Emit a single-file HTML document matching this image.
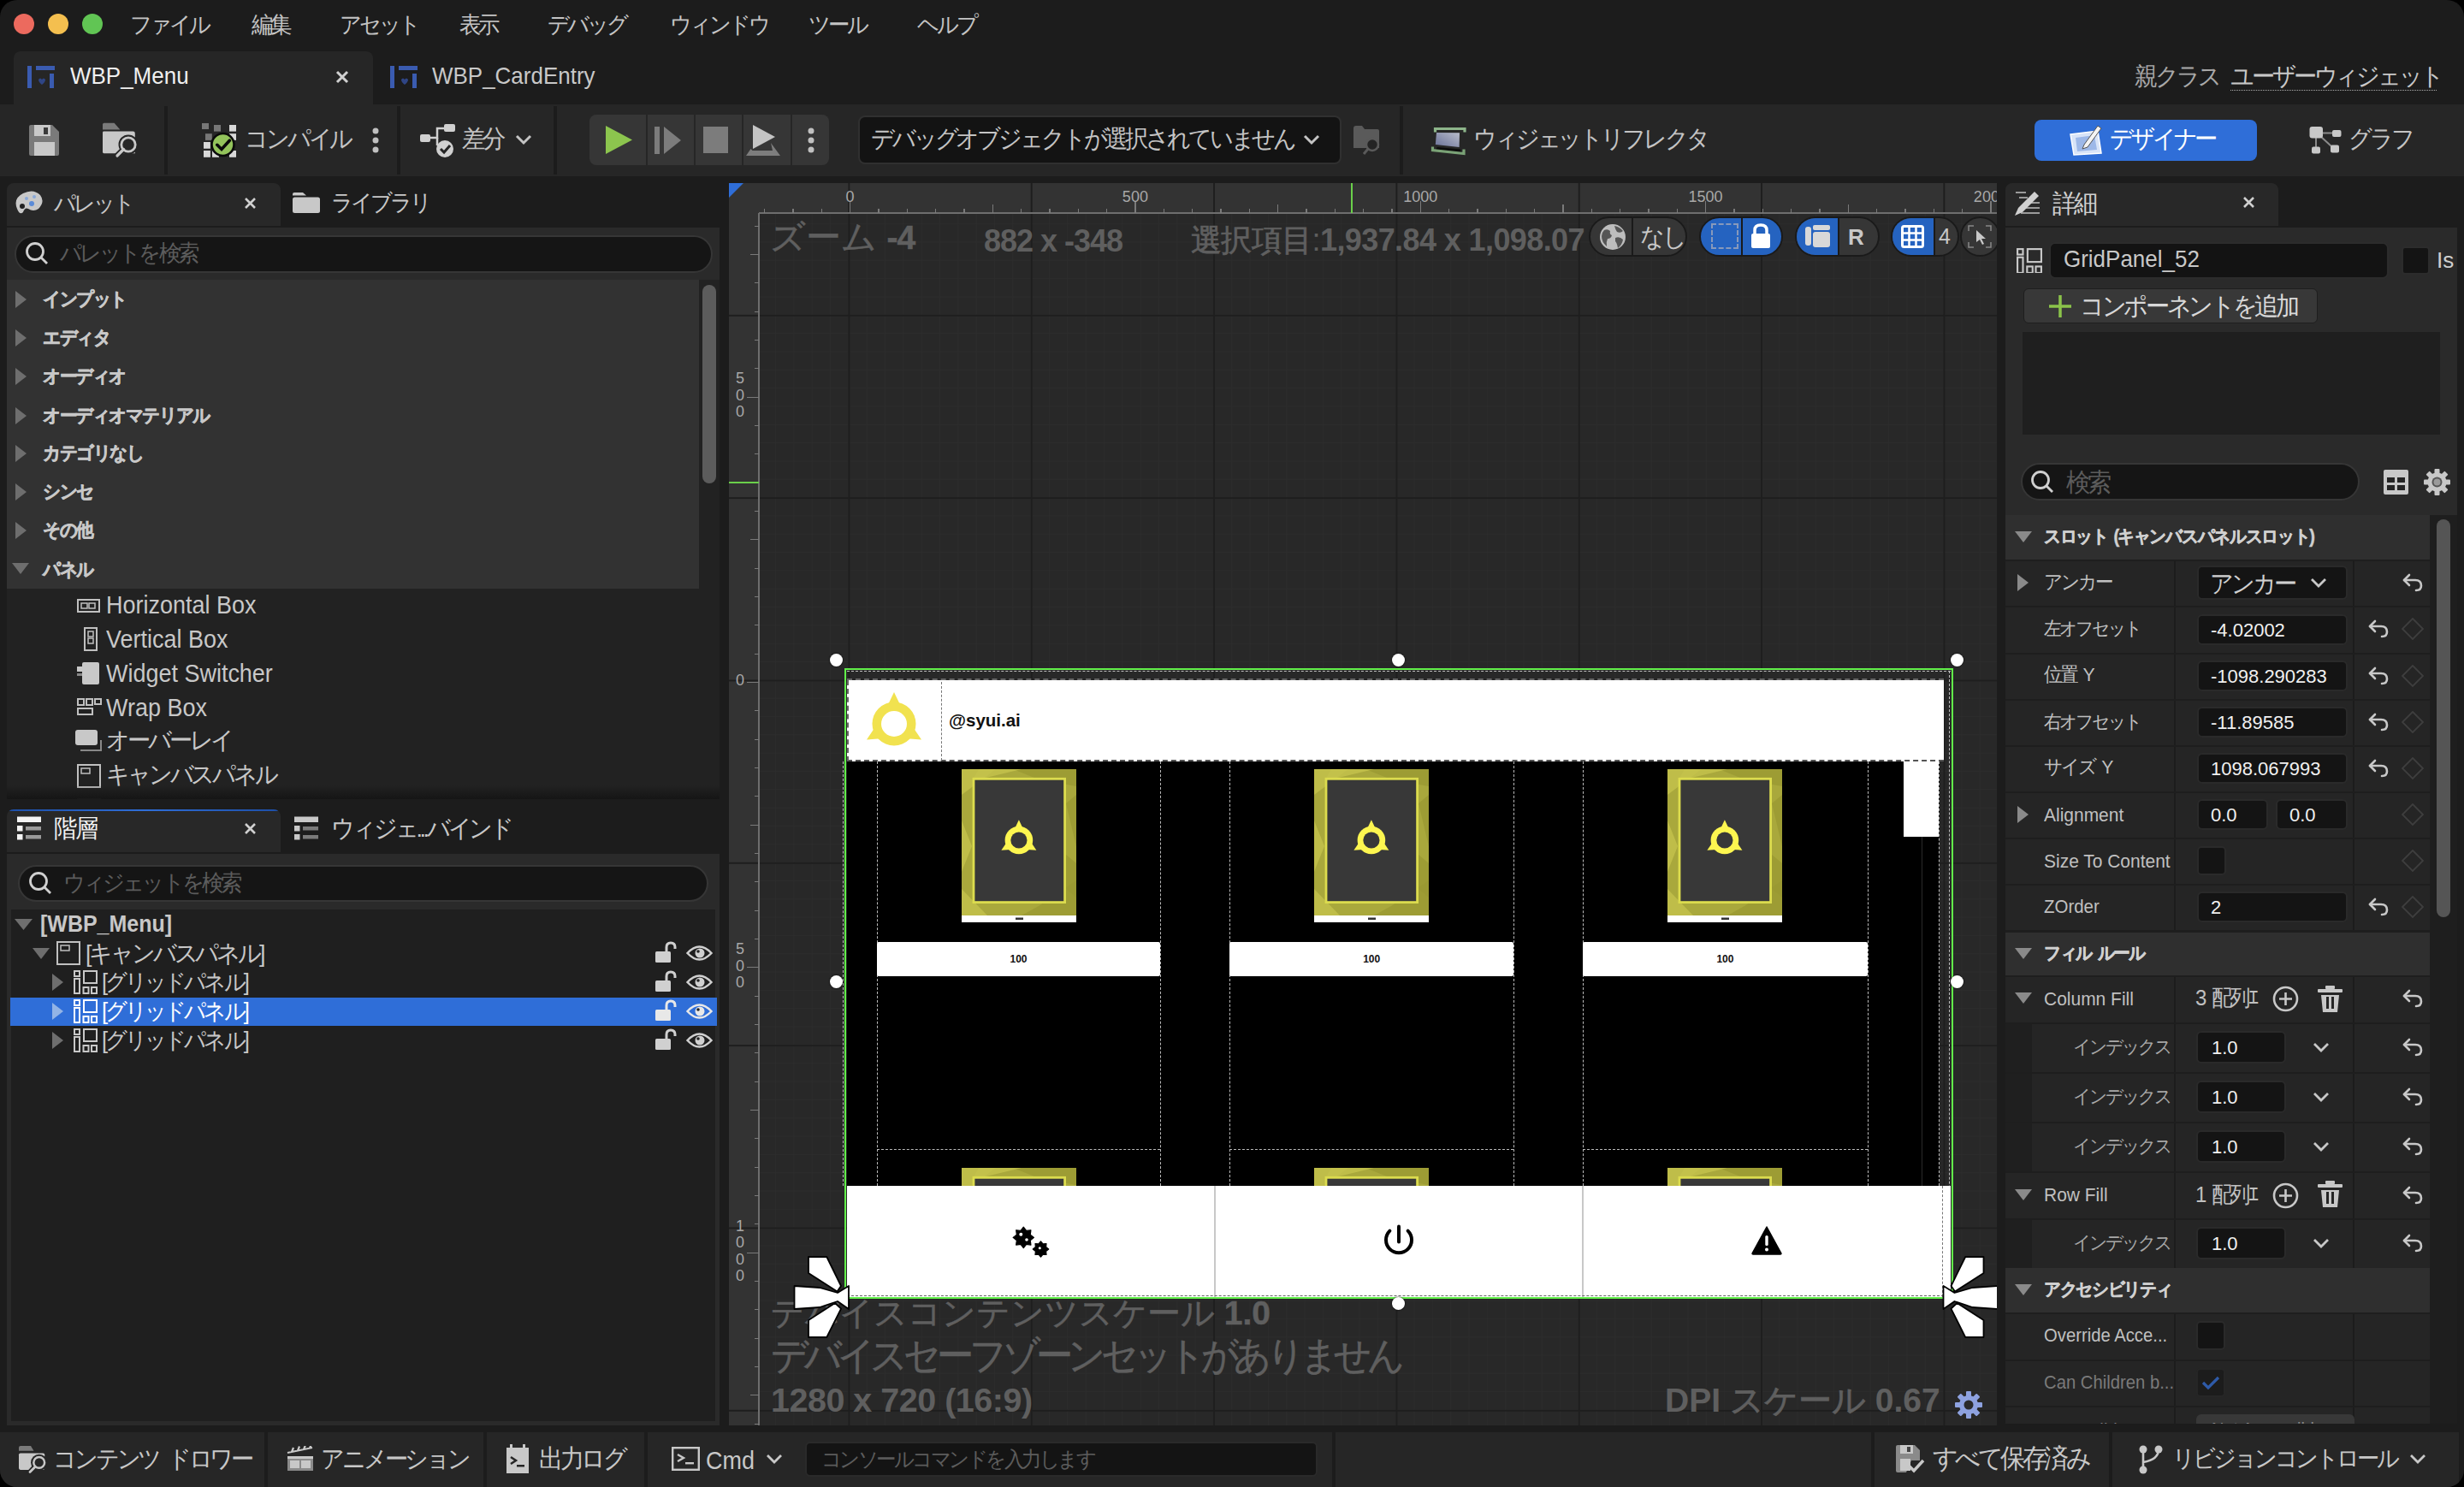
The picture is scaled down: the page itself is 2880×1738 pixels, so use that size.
<!DOCTYPE html>
<html><head><meta charset="utf-8">
<style>
*{box-sizing:border-box;margin:0;padding:0}
html,body{width:2880px;height:1738px;overflow:hidden;background:#000}
body{font-family:"Liberation Sans",sans-serif;position:relative;color:#c0c0c0}
.a{position:absolute}
.t{position:absolute;white-space:nowrap;line-height:1}
#win{left:0;top:0;width:2880px;height:1738px;background:#1c1c1c;border-radius:20px;overflow:hidden}
.sep{position:absolute;width:4px;background:#1c1c1c}
.bj{-webkit-text-stroke:0.6px currentColor}
</style></head><body>
<div id="win" class="a">

<!-- ===== TITLE / MENU BAR ===== -->
<div class="a" style="left:16px;top:16px;width:24px;height:24px;border-radius:50%;background:#ec6a5e"></div>
<div class="a" style="left:56px;top:16px;width:24px;height:24px;border-radius:50%;background:#f4bf4f"></div>
<div class="a" style="left:96px;top:16px;width:24px;height:24px;border-radius:50%;background:#61c554"></div>
<div id="menu" style="font-size:23px;color:#c4c4c4">
<span class="t" style="left:152px;top:14.84px;font-size:27.31px;letter-spacing:-3.41px;transform:scaleX(0.94);transform-origin:0 0;word-spacing:5.46px">ファイル</span>
<span class="t" style="left:294px;top:14.84px;font-size:27.31px;letter-spacing:-3.41px;transform:scaleX(0.94);transform-origin:0 0;word-spacing:5.46px">編集</span>
<span class="t" style="left:397px;top:14.84px;font-size:27.31px;letter-spacing:-3.41px;transform:scaleX(0.94);transform-origin:0 0;word-spacing:5.46px">アセット</span>
<span class="t" style="left:537px;top:14.84px;font-size:27.31px;letter-spacing:-3.41px;transform:scaleX(0.94);transform-origin:0 0;word-spacing:5.46px">表示</span>
<span class="t" style="left:640px;top:14.84px;font-size:27.31px;letter-spacing:-3.41px;transform:scaleX(0.94);transform-origin:0 0;word-spacing:5.46px">デバッグ</span>
<span class="t" style="left:783px;top:14.84px;font-size:27.31px;letter-spacing:-3.41px;transform:scaleX(0.94);transform-origin:0 0;word-spacing:5.46px">ウィンドウ</span>
<span class="t" style="left:945px;top:14.84px;font-size:27.31px;letter-spacing:-3.41px;transform:scaleX(0.94);transform-origin:0 0;word-spacing:5.46px">ツール</span>
<span class="t" style="left:1072px;top:14.84px;font-size:27.31px;letter-spacing:-3.41px;transform:scaleX(0.94);transform-origin:0 0;word-spacing:5.46px">ヘルプ</span>
</div>

<!-- ===== DOCUMENT TABS ===== -->
<div class="a" style="left:16px;top:60px;width:420px;height:62px;background:#262626;border-radius:8px 8px 0 0"></div>
<svg class="a" style="left:31px;top:76px" width="34" height="28" viewBox="0 0 34 28">
 <rect x="1" y="1" width="5" height="26" fill="#3a5bb0"/><rect x="11" y="1" width="22" height="5" fill="#3a5bb0"/><rect x="27" y="10" width="5" height="17" fill="#3a5bb0"/>
 <path d="M14 17 q2-3 4 0 q2-3 4 0 q0 3-4 6 q-4-3-4-6z" fill="#2f4585"/>
</svg>
<span class="t" style="left:82px;top:74.86px;font-size:28.08px;color:#f0f0f0;transform:scaleX(0.925);transform-origin:0 0">WBP_Menu</span>
<svg class="a" style="left:392px;top:82px" width="16" height="16" viewBox="0 0 16 16"><path d="M2 2L14 14M14 2L2 14" stroke="#d0d0d0" stroke-width="3"/></svg>
<svg class="a" style="left:455px;top:76px" width="34" height="28" viewBox="0 0 34 28">
 <rect x="1" y="1" width="5" height="26" fill="#3a5bb0"/><rect x="11" y="1" width="22" height="5" fill="#3a5bb0"/><rect x="27" y="10" width="5" height="17" fill="#3a5bb0"/>
 <path d="M14 17 q2-3 4 0 q2-3 4 0 q0 3-4 6 q-4-3-4-6z" fill="#2f4585"/>
</svg>
<span class="t" style="left:505px;top:74.86px;font-size:28.08px;color:#c8c8c8;transform:scaleX(0.925);transform-origin:0 0">WBP_CardEntry</span>
<span class="t" style="left:2495px;top:74.75px;font-size:28.50px;color:#a8a8a8;letter-spacing:-3.56px;transform:scaleX(0.94);transform-origin:0 0;word-spacing:5.70px">親クラス</span>
<span class="t" style="left:2607px;top:74.75px;font-size:28.50px;color:#c8c8c8;letter-spacing:-3.56px;transform:scaleX(0.94);transform-origin:0 0;word-spacing:5.70px">ユーザーウィジェット</span>
<div class="a" style="left:2607px;top:105px;width:241px;height:0;border-top:1px dotted #aaa"></div>

<!-- ===== TOOLBAR ===== -->
<div class="a" style="left:0;top:122px;width:2880px;height:84px;background:#262626"></div>
<div class="sep" style="left:192px;top:124px;height:80px"></div>
<div class="sep" style="left:464px;top:124px;height:80px"></div>
<div class="sep" style="left:647px;top:124px;height:80px"></div>
<div class="sep" style="left:1636px;top:124px;height:80px"></div>
<!-- save -->
<svg class="a" style="left:34px;top:146px" width="36" height="36" viewBox="0 0 36 36">
 <path d="M0 2 Q0 0 2 0 H27 L35 8 V34 Q35 36 33 36 H2 Q0 36 0 34Z" fill="#7a7a7a"/>
 <rect x="6" y="0" width="19" height="13" fill="#c8c8c8"/><rect x="17" y="3" width="5" height="8" fill="#3a3a3a"/>
 <rect x="6" y="20" width="24" height="16" fill="#c8c8c8"/>
</svg>
<!-- browse -->
<svg class="a" style="left:110px;top:135px" width="60" height="60" viewBox="0 0 60 60">
 <path d="M10 10.5 Q10 8.8 11.7 8.8 H23.5 L30.3 16.4 H10Z" fill="#7a7a7a"/>
 <path d="M10 20 Q10 18.6 11.4 18.6 H45.5 Q47.8 18.6 47.8 21 V44.2 H11.4 Q10 44.2 10 42.8Z" fill="#c8c8c8"/>
 <circle cx="40" cy="34" r="11.5" fill="#262626"/>
 <path d="M34 40 L26 48" stroke="#262626" stroke-width="7" stroke-linecap="round"/>
 <circle cx="40" cy="34" r="8.2" fill="#262626" stroke="#c8c8c8" stroke-width="2.8"/>
 <path d="M34.5 39.5 L27 47" stroke="#c8c8c8" stroke-width="3.2" stroke-linecap="round"/>
</svg>
<!-- compile -->
<svg class="a" style="left:230px;top:135px" width="50" height="55" viewBox="0 0 50 55">
 <rect x="6" y="9" width="8" height="7" fill="#777"/><rect x="20" y="11" width="8" height="7.6" fill="#777"/><rect x="38" y="11" width="8" height="7.6" fill="#d8d8d8"/>
 <rect x="10" y="21.2" width="7.8" height="7.7" fill="#777"/><rect x="38" y="21.2" width="8" height="7.7" fill="#d8d8d8"/>
 <rect x="8" y="31" width="7.9" height="7.7" fill="#d8d8d8"/><rect x="8" y="41" width="7.9" height="7.8" fill="#d8d8d8"/><rect x="18" y="41" width="8" height="7.8" fill="#d8d8d8"/><rect x="38" y="41" width="8" height="7.8" fill="#d8d8d8"/>
 <circle cx="30.5" cy="34" r="13" fill="#93c35b" stroke="#0a0a0a" stroke-width="2.6"/>
 <path d="M23.8 34.3 L29 39.5 L38.3 29.2" stroke="#0a0a0a" stroke-width="3.6" fill="none" stroke-linecap="round"/>
</svg>
<span class="t" style="left:286px;top:147.75px;font-size:28.50px;color:#c4c4c4;letter-spacing:-3.56px;transform:scaleX(0.94);transform-origin:0 0;word-spacing:5.70px">コンパイル</span>
<svg class="a" style="left:434px;top:149px" width="10" height="30"><circle cx="5" cy="4" r="3.5" fill="#c0c0c0"/><circle cx="5" cy="15" r="3.5" fill="#c0c0c0"/><circle cx="5" cy="26" r="3.5" fill="#c0c0c0"/></svg>
<!-- diff -->
<svg class="a" style="left:491px;top:145px" width="42" height="40" viewBox="0 0 42 40">
 <rect x="0" y="12" width="12" height="9" rx="2" fill="#d0d0d0"/><rect x="28" y="0" width="13" height="9" rx="2" fill="#d0d0d0"/>
 <path d="M12 16 H20 V5 H28" stroke="#d0d0d0" stroke-width="2.5" fill="none"/><path d="M20 16 V25" stroke="#d0d0d0" stroke-width="2.5"/>
 <circle cx="29" cy="29" r="10" fill="#d0d0d0"/><path d="M24 29 L28 33 L35 25" stroke="#242424" stroke-width="3" fill="none"/>
</svg>
<span class="t" style="left:540px;top:147.75px;font-size:28.50px;color:#c4c4c4;letter-spacing:-3.56px;transform:scaleX(0.94);transform-origin:0 0;word-spacing:5.70px">差分</span>
<svg class="a" style="left:602px;top:156px" width="20" height="14"><path d="M2 3 L10 11 L18 3" stroke="#c4c4c4" stroke-width="3" fill="none"/></svg>
<!-- play group -->
<div class="a" style="left:689px;top:134px;width:280px;height:59px;background:#363636;border-radius:8px"></div>
<div class="a" style="left:755px;top:134px;width:2px;height:59px;background:#262626"></div>
<div class="a" style="left:811px;top:134px;width:2px;height:59px;background:#262626"></div>
<div class="a" style="left:867px;top:134px;width:2px;height:59px;background:#262626"></div>
<div class="a" style="left:924px;top:134px;width:2px;height:59px;background:#262626"></div>
<svg class="a" style="left:708px;top:147px" width="32" height="33"><path d="M0 0 L31 16.5 L0 33Z" fill="#8cc54e"/></svg>
<svg class="a" style="left:765px;top:148px" width="32" height="32"><rect x="0" y="0" width="6" height="32" fill="#7c7c7c"/><path d="M11 0 L31 16 L11 32Z" fill="#7c7c7c"/></svg>
<div class="a" style="left:822px;top:148px;width:29px;height:31px;background:#7c7c7c"></div>
<svg class="a" style="left:871px;top:146px" width="42" height="38"><path d="M9 0 L35 14 L9 28Z" fill="#c4c4c4"/><path d="M1 36 H41 L30 21 L32 30 H8.5 L6.5 28Z" fill="#7d7d7d"/></svg>
<svg class="a" style="left:943px;top:149px" width="10" height="30"><circle cx="5" cy="4" r="3.5" fill="#c0c0c0"/><circle cx="5" cy="15" r="3.5" fill="#c0c0c0"/><circle cx="5" cy="26" r="3.5" fill="#c0c0c0"/></svg>
<!-- debug dropdown -->
<div class="a" style="left:1003px;top:135px;width:565px;height:57px;background:#131313;border:2px solid #303030;border-radius:8px"></div>
<span class="t" style="left:1018px;top:147.75px;font-size:28.50px;color:#c4c4c4;letter-spacing:-3.56px;transform:scaleX(0.94);transform-origin:0 0;word-spacing:5.70px">デバッグオブジェクトが選択されていません</span>
<svg class="a" style="left:1523px;top:156px" width="20" height="14"><path d="M2 3 L10 11 L18 3" stroke="#c4c4c4" stroke-width="3" fill="none"/></svg>
<svg class="a" style="left:1582px;top:147px" width="34" height="34" viewBox="0 0 34 34">
 <path d="M0 3 Q0 0 3 0 H10 L13 4 H28 Q30 4 30 6 V26 H0Z" fill="#5a5a5a"/>
 <circle cx="22" cy="22" r="7" fill="#242424" stroke="#5a5a5a" stroke-width="2.5"/><path d="M17 27 L12 33" stroke="#5a5a5a" stroke-width="3"/>
</svg>
<!-- reflector -->
<svg class="a" style="left:1670px;top:146px" width="46" height="38" viewBox="0 0 46 38"><defs><linearGradient id="rg" x1="0" y1="1" x2="1" y2="0"><stop offset="0" stop-color="#6a7198"/><stop offset="1" stop-color="#b8bccb"/></linearGradient></defs><path d="M7.5 8.5 V4.5 H42 V8.5" stroke="#8db58a" stroke-width="3.2" fill="none"/><path d="M10 26 L37 28.5 L38 32 L8 29Z" fill="#0c0c0c"/><path d="M9 9 L36 9.2 L35.6 26 L7.8 23Z" fill="url(#rg)"/><path d="M4.5 25.5 V29.5 L41 33.5 V28.5" stroke="#7aa276" stroke-width="3.2" fill="none"/></svg>
<span class="t" style="left:1722px;top:147.75px;font-size:28.50px;color:#c4c4c4;letter-spacing:-3.56px;transform:scaleX(0.94);transform-origin:0 0;word-spacing:5.70px">ウィジェットリフレクタ</span>
<!-- designer / graph -->
<div class="a" style="left:2378px;top:140px;width:260px;height:48px;background:#2f6ed8;border-radius:8px"></div>
<svg class="a" style="left:2418px;top:143px" width="40" height="40" viewBox="0 0 40 40">
 <path d="M2 14 L34 10 L38 36 L6 38Z" fill="#d8e4f8" stroke="#fff" stroke-width="1.5"/><path d="M8 18 L30 15 L33 32 L10 34Z" fill="#9db8e8"/>
 <path d="M18 26 L34 4 L38 7 L22 29 L16 31Z" fill="#f4f4f4" stroke="#555" stroke-width="1"/>
</svg>
<span class="t" style="left:2466px;top:147.75px;font-size:28.50px;color:#ffffff;letter-spacing:-3.56px;transform:scaleX(0.94);transform-origin:0 0;word-spacing:5.70px">デザイナー</span>
<svg class="a" style="left:2698px;top:147px" width="40" height="35" viewBox="0 0 40 35"><path d="M17 8.5 H28 M9 14 V25 M14 12 L27 24" stroke="#8a8a8a" stroke-width="2"/><rect x="1.5" y="1" width="15.5" height="13.5" rx="3" fill="#c8c8c8"/><rect x="28" y="5" width="10.5" height="8" rx="2" fill="#c8c8c8"/><rect x="4" y="24.6" width="10" height="8" rx="2" fill="#c8c8c8"/><rect x="26" y="22.6" width="10" height="9" rx="2" fill="#c8c8c8"/></svg>
<span class="t" style="left:2745px;top:147.75px;font-size:28.50px;color:#c4c4c4;letter-spacing:-3.56px;transform:scaleX(0.94);transform-origin:0 0;word-spacing:5.70px">グラフ</span>

<!-- ===== LEFT PANEL ===== -->
<div class="a" style="left:8px;top:214px;width:320px;height:50px;background:#282828;border-radius:8px 8px 0 0"></div>
<svg class="a" style="left:17px;top:222px" width="34" height="30" viewBox="0 0 34 30">
 <path d="M3 22 Q-2 10 10 4 Q22 -2 30 6 Q36 14 28 22 Q22 26 16 22 Q12 20 10 26 Q6 30 3 22Z" fill="#c8c8c8"/>
 <circle cx="9" cy="19" r="3" fill="#222"/><circle cx="20" cy="16" r="3" fill="#5b8bd8"/><circle cx="14" cy="10" r="2" fill="#8aa8d8"/><circle cx="23" cy="8" r="2" fill="#8aa8d8"/>
</svg>
<span class="t" style="left:63px;top:223.84px;font-size:27.31px;color:#c8c8c8;letter-spacing:-3.41px;transform:scaleX(0.94);transform-origin:0 0;word-spacing:5.46px">パレット</span>
<svg class="a" style="left:285px;top:230px" width="15" height="15" viewBox="0 0 15 15"><path d="M2 2L13 13M13 2L2 13" stroke="#d0d0d0" stroke-width="2.6"/></svg>
<svg class="a" style="left:342px;top:224px" width="33" height="26" viewBox="0 0 33 26"><path d="M0 3 Q0 1 2 1 H12 L16 4.5 H0Z" fill="#c8c8c8"/><rect x="0" y="6.5" width="32" height="18.5" rx="2.5" fill="#c8c8c8"/></svg>
<span class="t" style="left:387px;top:222.84px;font-size:27.31px;color:#c8c8c8;letter-spacing:-3.41px;transform:scaleX(0.94);transform-origin:0 0;word-spacing:5.46px">ライブラリ</span>
<div class="a" style="left:8px;top:266px;width:833px;height:61px;background:#2a2a2a"></div>
<div class="a" style="left:17px;top:275px;width:816px;height:44px;background:#151515;border:2px solid #363636;border-radius:22px"></div>
<svg class="a" style="left:28px;top:281px" width="30" height="30" viewBox="0 0 30 30"><circle cx="13" cy="13" r="9.5" fill="none" stroke="#d0d0d0" stroke-width="2.8"/><path d="M20 20 L27 27" stroke="#d0d0d0" stroke-width="2.8"/></svg>
<span class="t" style="left:70px;top:281.84px;font-size:27.31px;color:#5c5c5c;letter-spacing:-3.41px;transform:scaleX(0.94);transform-origin:0 0;word-spacing:5.46px">パレットを検索</span>
<div class="a" style="left:8px;top:327px;width:809px;height:361px;background:#323232"></div>
<div class="a" style="left:817px;top:327px;width:24px;height:361px;background:#222"></div>
<div class="a" style="left:821px;top:333px;width:16px;height:232px;background:#5c5c5c;border-radius:8px"></div>
<div id="cats" class="bj" style="font-size:19.5px;font-weight:bold;color:#c8c8c8">
<svg class="a" style="left:18px;top:340px" width="13" height="20"><path d="M0 0 L13 10 L0 20Z" fill="#6e6e6e"/></svg><span class="t" style="left:50px;top:338.83px;font-size:21.84px;letter-spacing:-2.18px;transform:scaleX(0.94);transform-origin:0 0;word-spacing:3.49px">インプット</span>
<svg class="a" style="left:18px;top:385px" width="13" height="20"><path d="M0 0 L13 10 L0 20Z" fill="#6e6e6e"/></svg><span class="t" style="left:50px;top:383.83px;font-size:21.84px;letter-spacing:-2.18px;transform:scaleX(0.94);transform-origin:0 0;word-spacing:3.49px">エディタ</span>
<svg class="a" style="left:18px;top:430px" width="13" height="20"><path d="M0 0 L13 10 L0 20Z" fill="#6e6e6e"/></svg><span class="t" style="left:50px;top:428.83px;font-size:21.84px;letter-spacing:-2.18px;transform:scaleX(0.94);transform-origin:0 0;word-spacing:3.49px">オーディオ</span>
<svg class="a" style="left:18px;top:476px" width="13" height="20"><path d="M0 0 L13 10 L0 20Z" fill="#6e6e6e"/></svg><span class="t" style="left:50px;top:474.83px;font-size:21.84px;letter-spacing:-2.18px;transform:scaleX(0.94);transform-origin:0 0;word-spacing:3.49px">オーディオマテリアル</span>
<svg class="a" style="left:18px;top:520px" width="13" height="20"><path d="M0 0 L13 10 L0 20Z" fill="#6e6e6e"/></svg><span class="t" style="left:50px;top:518.83px;font-size:21.84px;letter-spacing:-2.18px;transform:scaleX(0.94);transform-origin:0 0;word-spacing:3.49px">カテゴリなし</span>
<svg class="a" style="left:18px;top:565px" width="13" height="20"><path d="M0 0 L13 10 L0 20Z" fill="#6e6e6e"/></svg><span class="t" style="left:50px;top:563.83px;font-size:21.84px;letter-spacing:-2.18px;transform:scaleX(0.94);transform-origin:0 0;word-spacing:3.49px">シンセ</span>
<svg class="a" style="left:18px;top:610px" width="13" height="20"><path d="M0 0 L13 10 L0 20Z" fill="#6e6e6e"/></svg><span class="t" style="left:50px;top:608.83px;font-size:21.84px;letter-spacing:-2.18px;transform:scaleX(0.94);transform-origin:0 0;word-spacing:3.49px">その他</span>
<svg class="a" style="left:14px;top:658px" width="20" height="13"><path d="M0 0 L20 0 L10 13Z" fill="#6e6e6e"/></svg><span class="t" style="left:50px;top:654.83px;font-size:21.84px;letter-spacing:-2.18px;transform:scaleX(0.94);transform-origin:0 0;word-spacing:3.49px">パネル</span>
</div>
<div class="a" style="left:8px;top:688px;width:833px;height:246px;background:#222222;overflow:hidden">
 <div style="position:absolute;left:0;top:0;font-size:27px;color:#c8c8c8">
 <svg class="a" style="left:82px;top:12px" width="27" height="16" viewBox="0 0 27 16"><rect x="1" y="1" width="25" height="14" fill="none" stroke="#c0c0c0" stroke-width="2"/><rect x="5" y="5" width="7" height="6" fill="none" stroke="#c0c0c0" stroke-width="1.5"/><rect x="14" y="5" width="7" height="6" fill="none" stroke="#c0c0c0" stroke-width="1.5"/></svg>
 <span class="t" style="left:116px;top:4.81px;font-size:29.16px;transform:scaleX(0.925);transform-origin:0 0">Horizontal Box</span>
 <svg class="a" style="left:90px;top:45px" width="16" height="28" viewBox="0 0 16 28"><rect x="1" y="1" width="14" height="26" fill="none" stroke="#c0c0c0" stroke-width="2"/><rect x="5" y="5" width="6" height="6" fill="none" stroke="#c0c0c0" stroke-width="1.5"/><rect x="5" y="13" width="6" height="6" fill="none" stroke="#c0c0c0" stroke-width="1.5"/></svg>
 <span class="t" style="left:116px;top:44.81px;font-size:29.16px;transform:scaleX(0.925);transform-origin:0 0">Vertical Box</span>
 <svg class="a" style="left:82px;top:85px" width="27" height="28" viewBox="0 0 27 28"><rect x="6" y="1" width="20" height="26" rx="2" fill="#c8c8c8"/><rect x="0" y="6" width="6" height="6" fill="#c8c8c8"/><rect x="0" y="14" width="6" height="3" fill="#888"/></svg>
 <span class="t" style="left:116px;top:84.81px;font-size:29.16px;transform:scaleX(0.925);transform-origin:0 0">Widget Switcher</span>
 <svg class="a" style="left:82px;top:128px" width="29" height="20" viewBox="0 0 29 20"><rect x="1" y="1" width="7" height="7" fill="none" stroke="#c0c0c0" stroke-width="2"/><rect x="11" y="1" width="7" height="7" fill="none" stroke="#c0c0c0" stroke-width="2"/><rect x="21" y="1" width="7" height="6" fill="none" stroke="#c0c0c0" stroke-width="2"/><rect x="1" y="12" width="17" height="7" fill="none" stroke="#c0c0c0" stroke-width="2"/></svg>
 <span class="t" style="left:116px;top:124.81px;font-size:29.16px;transform:scaleX(0.925);transform-origin:0 0">Wrap Box</span>
 <svg class="a" style="left:80px;top:165px" width="32" height="26" viewBox="0 0 32 26"><rect x="0" y="0" width="26" height="18" rx="3" fill="#c8c8c8"/><path d="M6 24 H30 V12" stroke="#888" stroke-width="2" fill="none"/></svg>
 <span class="t" style="left:116px;top:162.75px;font-size:28.50px;letter-spacing:-3.56px;transform:scaleX(0.94);transform-origin:0 0;word-spacing:5.70px">オーバーレイ</span>
 <svg class="a" style="left:82px;top:205px" width="28" height="28" viewBox="0 0 28 28"><rect x="1" y="1" width="26" height="26" fill="none" stroke="#c0c0c0" stroke-width="2"/><rect x="5" y="5" width="10" height="6" fill="none" stroke="#c0c0c0" stroke-width="1.5"/></svg>
 <span class="t" style="left:116px;top:202.75px;font-size:28.50px;letter-spacing:-3.56px;transform:scaleX(0.94);transform-origin:0 0;word-spacing:5.70px">キャンバスパネル</span>
 <svg class="a" style="left:82px;top:245px" width="28" height="28" viewBox="0 0 28 28"><rect x="1" y="1" width="26" height="26" fill="none" stroke="#c0c0c0" stroke-width="2"/></svg>
 </div>
 <div class="a" style="left:0;top:230px;width:833px;height:16px;background:linear-gradient(rgba(21,21,21,0),#151515)"></div>
</div>
<!-- hierarchy -->
<div class="a" style="left:8px;top:946px;width:320px;height:50px;background:#282828;border-radius:8px 8px 0 0;overflow:hidden"><div style="height:2px;background:linear-gradient(90deg,#1d4fa8,#2f6ed8,#1d4fa8)"></div></div>
<svg class="a" style="left:19px;top:954px" width="30" height="28" viewBox="0 0 30 28"><rect x="1" y="0.5" width="28" height="6.5" fill="#f4f4f4"/><rect x="1" y="11" width="6.5" height="6.5" fill="#f4f4f4"/><rect x="11" y="12" width="18" height="4.5" fill="#9a9a9a"/><rect x="1" y="21" width="6.5" height="6.5" fill="#f4f4f4"/><rect x="11" y="22" width="18" height="4.5" fill="#9a9a9a"/></svg>
<span class="t" style="left:63px;top:954px;font-size:28.5px;color:#f2f2f2;letter-spacing:-2.5px;transform:scaleX(0.94);transform-origin:0 0">階層</span>
<svg class="a" style="left:285px;top:961px" width="15" height="15" viewBox="0 0 15 15"><path d="M2 2L13 13M13 2L2 13" stroke="#d0d0d0" stroke-width="2.6"/></svg>
<svg class="a" style="left:343px;top:954px" width="30" height="28" viewBox="0 0 30 28"><rect x="1" y="0.5" width="28" height="6.5" fill="#c8c8c8"/><rect x="1" y="11" width="6.5" height="6.5" fill="#c8c8c8"/><rect x="11" y="12" width="18" height="4.5" fill="#7a7a7a"/><rect x="1" y="21" width="6.5" height="6.5" fill="#c8c8c8"/><rect x="11" y="22" width="18" height="4.5" fill="#7a7a7a"/></svg>
<span class="t" style="left:387px;top:953.75px;font-size:28.50px;color:#c8c8c8;letter-spacing:-3.56px;transform:scaleX(0.94);transform-origin:0 0;word-spacing:5.70px">ウィジェ...バインド</span>
<div class="a" style="left:8px;top:998px;width:833px;height:668px;background:#2a2a2a"></div>
<div class="a" style="left:21px;top:1011px;width:807px;height:43px;background:#151515;border:2px solid #363636;border-radius:22px"></div>
<svg class="a" style="left:32px;top:1017px" width="30" height="30" viewBox="0 0 30 30"><circle cx="13" cy="13" r="9.5" fill="none" stroke="#d0d0d0" stroke-width="2.8"/><path d="M20 20 L27 27" stroke="#d0d0d0" stroke-width="2.8"/></svg>
<span class="t" style="left:74px;top:1017.84px;font-size:27.31px;color:#5c5c5c;letter-spacing:-3.41px;transform:scaleX(0.94);transform-origin:0 0;word-spacing:5.46px">ウィジェットを検索</span>
<div class="a" style="left:11px;top:1063px;width:827px;height:600px;background:#1f1f1f;border:2px solid #2a2a2a;border-top:none"></div>
<div class="a" style="left:12px;top:1166px;width:826px;height:33px;background:#2f6ed8"></div>
<div id="tree" style="color:#c8c8c8">
 <svg class="a" style="left:17px;top:1074px" width="21" height="13"><path d="M0 0 L21 0 L10.5 13Z" fill="#6e6e6e"/></svg>
 <span class="t" style="left:47px;top:1066.90px;font-size:27.00px;font-weight:bold;transform:scaleX(0.925);transform-origin:0 0">[WBP_Menu]</span>
 <svg class="a" style="left:38px;top:1108px" width="20" height="13"><path d="M0 0 L20 0 L10 13Z" fill="#6e6e6e"/></svg>
 <svg class="a" style="left:66px;top:1100px" width="28" height="28" viewBox="0 0 28 28"><rect x="1" y="1" width="26" height="26" fill="none" stroke="#c0c0c0" stroke-width="2"/><rect x="5" y="5" width="10" height="6" fill="none" stroke="#c0c0c0" stroke-width="1.5"/></svg>
 <span class="t" style="left:100px;top:1099.75px;font-size:28.50px;letter-spacing:-3.56px;transform:scaleX(0.94);transform-origin:0 0;word-spacing:5.70px">[キャンバスパネル]</span>
 <svg class="a" style="left:61px;top:1138px" width="13" height="20"><path d="M0 0 L13 10 L0 20Z" fill="#6e6e6e"/></svg>
 <svg class="a" style="left:86px;top:1134px" width="28" height="28" viewBox="0 0 28 28"><rect x="1" y="1" width="6" height="6" fill="none" stroke="#c8c8c8" stroke-width="2"/><rect x="12" y="1" width="15" height="14" fill="none" stroke="#c8c8c8" stroke-width="2"/><rect x="1" y="10" width="6" height="17" fill="none" stroke="#c8c8c8" stroke-width="2"/><rect x="11.5" y="20" width="6" height="7" fill="none" stroke="#c8c8c8" stroke-width="2"/><rect x="21" y="20" width="6" height="7" fill="none" stroke="#c8c8c8" stroke-width="2"/></svg>
 <span class="t" style="left:119px;top:1133.84px;font-size:27.31px;letter-spacing:-3.41px;transform:scaleX(0.94);transform-origin:0 0;word-spacing:5.46px">[グリッドパネル]</span>
 <svg class="a" style="left:61px;top:1172px" width="13" height="20"><path d="M0 0 L13 10 L0 20Z" fill="#93b4e6"/></svg>
 <svg class="a" style="left:86px;top:1168px" width="28" height="28" viewBox="0 0 28 28"><rect x="1" y="1" width="6" height="6" fill="none" stroke="#fff" stroke-width="2"/><rect x="12" y="1" width="15" height="14" fill="none" stroke="#fff" stroke-width="2"/><rect x="1" y="10" width="6" height="17" fill="none" stroke="#fff" stroke-width="2"/><rect x="11.5" y="20" width="6" height="7" fill="none" stroke="#fff" stroke-width="2"/><rect x="21" y="20" width="6" height="7" fill="none" stroke="#fff" stroke-width="2"/></svg>
 <span class="t" style="left:119px;top:1167.84px;font-size:27.31px;color:#fff;letter-spacing:-3.41px;transform:scaleX(0.94);transform-origin:0 0;word-spacing:5.46px">[グリッドパネル]</span>
 <svg class="a" style="left:61px;top:1206px" width="13" height="20"><path d="M0 0 L13 10 L0 20Z" fill="#6e6e6e"/></svg>
 <svg class="a" style="left:86px;top:1202px" width="28" height="28" viewBox="0 0 28 28"><rect x="1" y="1" width="6" height="6" fill="none" stroke="#c8c8c8" stroke-width="2"/><rect x="12" y="1" width="15" height="14" fill="none" stroke="#c8c8c8" stroke-width="2"/><rect x="1" y="10" width="6" height="17" fill="none" stroke="#c8c8c8" stroke-width="2"/><rect x="11.5" y="20" width="6" height="7" fill="none" stroke="#c8c8c8" stroke-width="2"/><rect x="21" y="20" width="6" height="7" fill="none" stroke="#c8c8c8" stroke-width="2"/></svg>
 <span class="t" style="left:119px;top:1201.84px;font-size:27.31px;letter-spacing:-3.41px;transform:scaleX(0.94);transform-origin:0 0;word-spacing:5.46px">[グリッドパネル]</span>
</div>
<svg class="a" style="left:766px;top:1100px" width="26" height="26" viewBox="0 0 26 26"><rect x="0" y="12" width="18" height="13" rx="1.5" fill="#d0d0d0"/><path d="M13 12 V7 Q13 2 18 2 Q23 2 23 7 V9" stroke="#d0d0d0" stroke-width="3" fill="none"/></svg>
<svg class="a" style="left:802px;top:1103px" width="31" height="22" viewBox="0 0 31 22"><path d="M1.5 11 Q15.5 -4 29.5 11 Q15.5 26 1.5 11Z" fill="none" stroke="#d0d0d0" stroke-width="2.5"/><circle cx="16" cy="11" r="5.5" fill="#d0d0d0"/><circle cx="14" cy="9" r="1.8" fill="#222"/></svg>
<svg class="a" style="left:766px;top:1134px" width="26" height="26" viewBox="0 0 26 26"><rect x="0" y="12" width="18" height="13" rx="1.5" fill="#d0d0d0"/><path d="M13 12 V7 Q13 2 18 2 Q23 2 23 7 V9" stroke="#d0d0d0" stroke-width="3" fill="none"/></svg>
<svg class="a" style="left:802px;top:1137px" width="31" height="22" viewBox="0 0 31 22"><path d="M1.5 11 Q15.5 -4 29.5 11 Q15.5 26 1.5 11Z" fill="none" stroke="#d0d0d0" stroke-width="2.5"/><circle cx="16" cy="11" r="5.5" fill="#d0d0d0"/><circle cx="14" cy="9" r="1.8" fill="#222"/></svg>
<svg class="a" style="left:766px;top:1168px" width="26" height="26" viewBox="0 0 26 26"><rect x="0" y="12" width="18" height="13" rx="1.5" fill="#e8e8e8"/><path d="M13 12 V7 Q13 2 18 2 Q23 2 23 7 V9" stroke="#e8e8e8" stroke-width="3" fill="none"/></svg>
<svg class="a" style="left:802px;top:1171px" width="31" height="22" viewBox="0 0 31 22"><path d="M1.5 11 Q15.5 -4 29.5 11 Q15.5 26 1.5 11Z" fill="none" stroke="#e8e8e8" stroke-width="2.5"/><circle cx="16" cy="11" r="5.5" fill="#e8e8e8"/><circle cx="14" cy="9" r="1.8" fill="#222"/></svg>
<svg class="a" style="left:766px;top:1202px" width="26" height="26" viewBox="0 0 26 26"><rect x="0" y="12" width="18" height="13" rx="1.5" fill="#d0d0d0"/><path d="M13 12 V7 Q13 2 18 2 Q23 2 23 7 V9" stroke="#d0d0d0" stroke-width="3" fill="none"/></svg>
<svg class="a" style="left:802px;top:1205px" width="31" height="22" viewBox="0 0 31 22"><path d="M1.5 11 Q15.5 -4 29.5 11 Q15.5 26 1.5 11Z" fill="none" stroke="#d0d0d0" stroke-width="2.5"/><circle cx="16" cy="11" r="5.5" fill="#d0d0d0"/><circle cx="14" cy="9" r="1.8" fill="#222"/></svg>

<!-- ===== VIEWPORT ===== -->
<div class="a" style="left:852px;top:214px;width:1482px;height:1452px;overflow:hidden;background-color:#333;background-image:linear-gradient(90deg,#1e1e1e 2px,transparent 2px),linear-gradient(#1e1e1e 2px,transparent 2px);background-size:213.33px 213.33px,213.33px 213.33px;background-position:139.4px 0,0 153.8px">
 <!-- canvas with grid -->
 <div class="a" style="left:35px;top:35px;width:1447px;height:1417px;background-color:#282828;
   background-image:linear-gradient(90deg,#1e1e1e 2px,transparent 2px),linear-gradient(#1e1e1e 2px,transparent 2px),linear-gradient(90deg,#2c2c2c 1px,transparent 1px),linear-gradient(#2c2c2c 1px,transparent 1px);
   background-size:213.33px 213.33px,213.33px 213.33px,21.333px 21.333px,21.333px 21.333px;
   background-position:104.4px 0,0 118.8px,104.4px 0,0 118.8px"></div>
 <div class="a" style="left:35px;top:34px;width:1447px;height:1.5px;background:#6e6e6e"></div>
 <div class="a" style="left:34px;top:35px;width:1.5px;height:1417px;background:#6e6e6e"></div>
 <svg class="a" style="left:0;top:0" width="17" height="17"><path d="M0 0H17L0 17Z" fill="#2f6ed8"/></svg>
 <!--RULERS-->
 <div class="a" style="left:41.0px;top:29.5px;width:1.3px;height:5px;background:#7a7a7a"></div>
 <div class="a" style="left:74.3px;top:29.5px;width:1.3px;height:5px;background:#7a7a7a"></div>
 <div class="a" style="left:107.7px;top:29.5px;width:1.3px;height:5px;background:#7a7a7a"></div>
 <div class="a" style="left:141.0px;top:20.5px;width:1.3px;height:14px;background:#7a7a7a"></div>
 <span class="t" style="left:141.6px;top:7px;font-size:18px;color:#a8a8a8;transform:translateX(-50%)">0</span>
 <div class="a" style="left:174.3px;top:29.5px;width:1.3px;height:5px;background:#7a7a7a"></div>
 <div class="a" style="left:207.7px;top:29.5px;width:1.3px;height:5px;background:#7a7a7a"></div>
 <div class="a" style="left:241.0px;top:29.5px;width:1.3px;height:5px;background:#7a7a7a"></div>
 <div class="a" style="left:274.3px;top:29.5px;width:1.3px;height:5px;background:#7a7a7a"></div>
 <div class="a" style="left:307.7px;top:24.5px;width:1.3px;height:10px;background:#7a7a7a"></div>
 <div class="a" style="left:341.0px;top:29.5px;width:1.3px;height:5px;background:#7a7a7a"></div>
 <div class="a" style="left:374.3px;top:29.5px;width:1.3px;height:5px;background:#7a7a7a"></div>
 <div class="a" style="left:407.7px;top:29.5px;width:1.3px;height:5px;background:#7a7a7a"></div>
 <div class="a" style="left:441.0px;top:29.5px;width:1.3px;height:5px;background:#7a7a7a"></div>
 <div class="a" style="left:474.3px;top:20.5px;width:1.3px;height:14px;background:#7a7a7a"></div>
 <span class="t" style="left:474.9px;top:7px;font-size:18px;color:#a8a8a8;transform:translateX(-50%)">500</span>
 <div class="a" style="left:507.7px;top:29.5px;width:1.3px;height:5px;background:#7a7a7a"></div>
 <div class="a" style="left:541.0px;top:29.5px;width:1.3px;height:5px;background:#7a7a7a"></div>
 <div class="a" style="left:574.3px;top:29.5px;width:1.3px;height:5px;background:#7a7a7a"></div>
 <div class="a" style="left:607.7px;top:29.5px;width:1.3px;height:5px;background:#7a7a7a"></div>
 <div class="a" style="left:641.0px;top:24.5px;width:1.3px;height:10px;background:#7a7a7a"></div>
 <div class="a" style="left:674.3px;top:29.5px;width:1.3px;height:5px;background:#7a7a7a"></div>
 <div class="a" style="left:707.7px;top:29.5px;width:1.3px;height:5px;background:#7a7a7a"></div>
 <div class="a" style="left:741.0px;top:29.5px;width:1.3px;height:5px;background:#7a7a7a"></div>
 <div class="a" style="left:774.3px;top:29.5px;width:1.3px;height:5px;background:#7a7a7a"></div>
 <div class="a" style="left:807.7px;top:20.5px;width:1.3px;height:14px;background:#7a7a7a"></div>
 <span class="t" style="left:808.3px;top:7px;font-size:18px;color:#a8a8a8;transform:translateX(-50%)">1000</span>
 <div class="a" style="left:841.0px;top:29.5px;width:1.3px;height:5px;background:#7a7a7a"></div>
 <div class="a" style="left:874.3px;top:29.5px;width:1.3px;height:5px;background:#7a7a7a"></div>
 <div class="a" style="left:907.7px;top:29.5px;width:1.3px;height:5px;background:#7a7a7a"></div>
 <div class="a" style="left:941.0px;top:29.5px;width:1.3px;height:5px;background:#7a7a7a"></div>
 <div class="a" style="left:974.3px;top:24.5px;width:1.3px;height:10px;background:#7a7a7a"></div>
 <div class="a" style="left:1007.7px;top:29.5px;width:1.3px;height:5px;background:#7a7a7a"></div>
 <div class="a" style="left:1041.0px;top:29.5px;width:1.3px;height:5px;background:#7a7a7a"></div>
 <div class="a" style="left:1074.3px;top:29.5px;width:1.3px;height:5px;background:#7a7a7a"></div>
 <div class="a" style="left:1107.7px;top:29.5px;width:1.3px;height:5px;background:#7a7a7a"></div>
 <div class="a" style="left:1141.0px;top:20.5px;width:1.3px;height:14px;background:#7a7a7a"></div>
 <span class="t" style="left:1141.6px;top:7px;font-size:18px;color:#a8a8a8;transform:translateX(-50%)">1500</span>
 <div class="a" style="left:1174.3px;top:29.5px;width:1.3px;height:5px;background:#7a7a7a"></div>
 <div class="a" style="left:1207.7px;top:29.5px;width:1.3px;height:5px;background:#7a7a7a"></div>
 <div class="a" style="left:1241.0px;top:29.5px;width:1.3px;height:5px;background:#7a7a7a"></div>
 <div class="a" style="left:1274.3px;top:29.5px;width:1.3px;height:5px;background:#7a7a7a"></div>
 <div class="a" style="left:1307.7px;top:24.5px;width:1.3px;height:10px;background:#7a7a7a"></div>
 <div class="a" style="left:1341.0px;top:29.5px;width:1.3px;height:5px;background:#7a7a7a"></div>
 <div class="a" style="left:1374.3px;top:29.5px;width:1.3px;height:5px;background:#7a7a7a"></div>
 <div class="a" style="left:1407.7px;top:29.5px;width:1.3px;height:5px;background:#7a7a7a"></div>
 <div class="a" style="left:1441.0px;top:29.5px;width:1.3px;height:5px;background:#7a7a7a"></div>
 <div class="a" style="left:1474.3px;top:20.5px;width:1.3px;height:14px;background:#7a7a7a"></div>
 <span class="t" style="left:1474.9px;top:7px;font-size:18px;color:#a8a8a8;transform:translateX(-50%)">2000</span>
 <div class="a" style="left:29.5px;top:49.6px;width:5px;height:1.3px;background:#7a7a7a"></div>
 <div class="a" style="left:24.5px;top:82.9px;width:10px;height:1.3px;background:#7a7a7a"></div>
 <div class="a" style="left:29.5px;top:116.2px;width:5px;height:1.3px;background:#7a7a7a"></div>
 <div class="a" style="left:29.5px;top:149.6px;width:5px;height:1.3px;background:#7a7a7a"></div>
 <div class="a" style="left:29.5px;top:182.9px;width:5px;height:1.3px;background:#7a7a7a"></div>
 <div class="a" style="left:29.5px;top:216.2px;width:5px;height:1.3px;background:#7a7a7a"></div>
 <div class="a" style="left:20.5px;top:249.6px;width:14px;height:1.3px;background:#7a7a7a"></div>
 <span class="t" style="left:8px;top:219.4px;font-size:18px;color:#a8a8a8">5</span>
 <span class="t" style="left:8px;top:238.9px;font-size:18px;color:#a8a8a8">0</span>
 <span class="t" style="left:8px;top:258.4px;font-size:18px;color:#a8a8a8">0</span>
 <div class="a" style="left:29.5px;top:282.9px;width:5px;height:1.3px;background:#7a7a7a"></div>
 <div class="a" style="left:29.5px;top:316.2px;width:5px;height:1.3px;background:#7a7a7a"></div>
 <div class="a" style="left:29.5px;top:349.6px;width:5px;height:1.3px;background:#7a7a7a"></div>
 <div class="a" style="left:29.5px;top:382.9px;width:5px;height:1.3px;background:#7a7a7a"></div>
 <div class="a" style="left:24.5px;top:416.2px;width:10px;height:1.3px;background:#7a7a7a"></div>
 <div class="a" style="left:29.5px;top:449.6px;width:5px;height:1.3px;background:#7a7a7a"></div>
 <div class="a" style="left:29.5px;top:482.9px;width:5px;height:1.3px;background:#7a7a7a"></div>
 <div class="a" style="left:29.5px;top:516.2px;width:5px;height:1.3px;background:#7a7a7a"></div>
 <div class="a" style="left:29.5px;top:549.6px;width:5px;height:1.3px;background:#7a7a7a"></div>
 <div class="a" style="left:20.5px;top:582.9px;width:14px;height:1.3px;background:#7a7a7a"></div>
 <span class="t" style="left:8px;top:572.2px;font-size:18px;color:#a8a8a8">0</span>
 <div class="a" style="left:29.5px;top:616.2px;width:5px;height:1.3px;background:#7a7a7a"></div>
 <div class="a" style="left:29.5px;top:649.6px;width:5px;height:1.3px;background:#7a7a7a"></div>
 <div class="a" style="left:29.5px;top:682.9px;width:5px;height:1.3px;background:#7a7a7a"></div>
 <div class="a" style="left:29.5px;top:716.2px;width:5px;height:1.3px;background:#7a7a7a"></div>
 <div class="a" style="left:24.5px;top:749.6px;width:10px;height:1.3px;background:#7a7a7a"></div>
 <div class="a" style="left:29.5px;top:782.9px;width:5px;height:1.3px;background:#7a7a7a"></div>
 <div class="a" style="left:29.5px;top:816.2px;width:5px;height:1.3px;background:#7a7a7a"></div>
 <div class="a" style="left:29.5px;top:849.6px;width:5px;height:1.3px;background:#7a7a7a"></div>
 <div class="a" style="left:29.5px;top:882.9px;width:5px;height:1.3px;background:#7a7a7a"></div>
 <div class="a" style="left:20.5px;top:916.2px;width:14px;height:1.3px;background:#7a7a7a"></div>
 <span class="t" style="left:8px;top:886.1px;font-size:18px;color:#a8a8a8">5</span>
 <span class="t" style="left:8px;top:905.6px;font-size:18px;color:#a8a8a8">0</span>
 <span class="t" style="left:8px;top:925.1px;font-size:18px;color:#a8a8a8">0</span>
 <div class="a" style="left:29.5px;top:949.6px;width:5px;height:1.3px;background:#7a7a7a"></div>
 <div class="a" style="left:29.5px;top:982.9px;width:5px;height:1.3px;background:#7a7a7a"></div>
 <div class="a" style="left:29.5px;top:1016.2px;width:5px;height:1.3px;background:#7a7a7a"></div>
 <div class="a" style="left:29.5px;top:1049.6px;width:5px;height:1.3px;background:#7a7a7a"></div>
 <div class="a" style="left:24.5px;top:1082.9px;width:10px;height:1.3px;background:#7a7a7a"></div>
 <div class="a" style="left:29.5px;top:1116.2px;width:5px;height:1.3px;background:#7a7a7a"></div>
 <div class="a" style="left:29.5px;top:1149.6px;width:5px;height:1.3px;background:#7a7a7a"></div>
 <div class="a" style="left:29.5px;top:1182.9px;width:5px;height:1.3px;background:#7a7a7a"></div>
 <div class="a" style="left:29.5px;top:1216.2px;width:5px;height:1.3px;background:#7a7a7a"></div>
 <div class="a" style="left:20.5px;top:1249.6px;width:14px;height:1.3px;background:#7a7a7a"></div>
 <span class="t" style="left:8px;top:1209.7px;font-size:18px;color:#a8a8a8">1</span>
 <span class="t" style="left:8px;top:1229.2px;font-size:18px;color:#a8a8a8">0</span>
 <span class="t" style="left:8px;top:1248.7px;font-size:18px;color:#a8a8a8">0</span>
 <span class="t" style="left:8px;top:1268.2px;font-size:18px;color:#a8a8a8">0</span>
 <div class="a" style="left:29.5px;top:1282.9px;width:5px;height:1.3px;background:#7a7a7a"></div>
 <div class="a" style="left:29.5px;top:1316.2px;width:5px;height:1.3px;background:#7a7a7a"></div>
 <div class="a" style="left:29.5px;top:1349.6px;width:5px;height:1.3px;background:#7a7a7a"></div>
 <div class="a" style="left:29.5px;top:1382.9px;width:5px;height:1.3px;background:#7a7a7a"></div>
 <div class="a" style="left:24.5px;top:1416.2px;width:10px;height:1.3px;background:#7a7a7a"></div>
 <div class="a" style="left:29.5px;top:1449.6px;width:5px;height:1.3px;background:#7a7a7a"></div>
 <div class="a" style="left:727px;top:0;width:2px;height:35px;background:#6ad04a"></div>
 <div class="a" style="left:0;top:349px;width:35px;height:2px;background:#6ad04a"></div>
 <!--OVERLAYPOS--><div class="a" style="left:-852px;top:-214px;width:2880px;height:1738px">
 <span class="t" style="left:900px;top:257px;font-size:41px;color:#5f5f5f;-webkit-text-stroke:0.5px currentColor">ズーム <b style="letter-spacing:-1px;font-size:39px">-4</b></span>
 <span class="t" style="left:1150px;top:264px;font-size:36px;font-weight:bold;color:#5f5f5f;letter-spacing:-1px">882 x -348</span>
 <span class="t" style="left:1392px;top:263px;font-size:36px;color:#5f5f5f;letter-spacing:-0.6px"><span style="-webkit-text-stroke:0.7px currentColor">選択項目</span>:<b>1,937.84 x 1,098.07</b></span>
 <!-- pills -->
 <div class="a" style="left:1857px;top:253px;width:115px;height:47px;background:#363636;border:2px solid #1a1a1a;border-radius:24px;overflow:hidden"><div class="a" style="left:48px;top:0;width:2px;height:47px;background:#1a1a1a"></div></div>
 <svg class="a" style="left:1869px;top:261px" width="32" height="32" viewBox="0 0 32 32"><circle cx="16" cy="16" r="15" fill="#bdbdbd"/><path d="M6 8 Q10 6 13 9 Q12 13 15 14 Q14 18 10 18 Q8 22 9 27 Q3 22 3 15 Q3 11 6 8Z M18 3 Q24 4 28 9 Q25 12 21 10 Q19 7 18 3Z M19 17 Q24 15 28 19 Q27 25 22 29 Q21 23 19 21Z" fill="#555"/></svg>
 <span class="t" style="left:1917px;top:261.66px;font-size:29.69px;color:#c8c8c8;letter-spacing:-3.71px;transform:scaleX(0.94);transform-origin:0 0;word-spacing:5.94px">なし</span>
 <div class="a" style="left:1986px;top:253px;width:98px;height:47px;background:#2563c0;border:2px solid #1a1a1a;border-radius:24px;overflow:hidden"><div class="a" style="left:47px;top:0;width:2px;height:47px;background:#1a1a1a"></div></div>
 <div class="a" style="left:2000px;top:261px;width:32px;height:30px;background:#2563c0;border:2px dashed #8899bb"></div>
 <svg class="a" style="left:2046px;top:261px" width="24" height="29" viewBox="0 0 24 29"><path d="M5 13 V8 Q5 2 12 2 Q19 2 19 8 V13" stroke="#fff" stroke-width="3.5" fill="none"/><rect x="1" y="12" width="22" height="17" rx="2" fill="#fff"/></svg>
 <div class="a" style="left:2098px;top:253px;width:99px;height:47px;background:#363636;border:2px solid #1a1a1a;border-radius:24px;overflow:hidden"><div class="a" style="left:0;top:0;width:48px;height:47px;background:#2563c0"></div><div class="a" style="left:48px;top:0;width:2px;height:47px;background:#1a1a1a"></div></div>
 <svg class="a" style="left:2110px;top:263px" width="30" height="26" viewBox="0 0 30 26"><rect x="0" y="2" width="7" height="22" rx="3" fill="#d8d8d8"/><rect x="9" y="0" width="20" height="6" rx="2" fill="#d8d8d8"/><rect x="9" y="8" width="20" height="18" rx="3" fill="#d8d8d8"/></svg>
 <span class="t" style="left:2160px;top:264px;font-size:26px;font-weight:bold;color:#c8c8c8">R</span>
 <div class="a" style="left:2210px;top:253px;width:80px;height:47px;background:#363636;border:2px solid #1a1a1a;border-radius:24px;overflow:hidden"><div class="a" style="left:0;top:0;width:48px;height:47px;background:#2563c0"></div><div class="a" style="left:48px;top:0;width:2px;height:47px;background:#1a1a1a"></div></div>
 <svg class="a" style="left:2222px;top:263px" width="27" height="27" viewBox="0 0 27 27"><rect x="1.5" y="1.5" width="24" height="24" rx="2" fill="none" stroke="#fff" stroke-width="3"/><path d="M9.5 1.5V25.5M17.5 1.5V25.5M1.5 9.5H25.5M1.5 17.5H25.5" stroke="#fff" stroke-width="2.5"/></svg>
 <span class="t" style="left:2266px;top:264px;font-size:25px;color:#c8c8c8">4</span>
 <div class="a" style="left:2291px;top:253px;width:47px;height:47px;background:#363636;border:2px solid #1a1a1a;border-radius:24px"></div>
 <svg class="a" style="left:2300px;top:263px" width="28" height="27" viewBox="0 0 28 27"><path d="M1 7V1H7M21 1H27V7M27 20V26H21M7 26H1V20" stroke="#888" stroke-width="1.5" fill="none"/><path d="M10 6 L21 16 L16 16 L19 22 L17 23 L14 17 L10 20Z" fill="#c8c8c8"/></svg>
 <!-- bottom info -->
 <span class="t" style="left:901px;top:1515px;font-size:39px;color:#5f5f5f;-webkit-text-stroke:0.5px currentColor">デバイスコンテンツスケール <b>1.0</b></span>
 <span class="t" style="left:901px;top:1562.39px;font-size:45.72px;color:#5f5f5f;-webkit-text-stroke:0.5px currentColor;letter-spacing:-5.71px;transform:scaleX(0.94);transform-origin:0 0;word-spacing:9.14px">デバイスセーフゾーンセットがありません</span>
 <span class="t" style="left:901px;top:1617px;font-size:39.5px;font-weight:bold;color:#5f5f5f;letter-spacing:-0.5px">1280 x 720 (16:9)</span>
 <span class="t" style="left:1946px;top:1617px;font-size:39px;font-weight:bold;color:#5f5f5f">DPI <span style="font-weight:normal;-webkit-text-stroke:0.8px currentColor">スケール</span> 0.67</span>
 <svg class="a" style="left:2285px;top:1626px" width="32" height="32" viewBox="0 0 32 32"><g fill="#8ea2e0"><rect x="13" y="0" width="6" height="32" rx="1" transform="rotate(0 16 16)"/><rect x="13" y="0" width="6" height="32" rx="1" transform="rotate(45 16 16)"/><rect x="13" y="0" width="6" height="32" rx="1" transform="rotate(90 16 16)"/><rect x="13" y="0" width="6" height="32" rx="1" transform="rotate(135 16 16)"/><circle cx="16" cy="16" r="11"/></g><circle cx="16" cy="16" r="5.5" fill="#2a2a2a"/></svg>
</div>
 <!--PREVIEW-->
 <div class="a" style="left:-852px;top:-214px;width:2880px;height:1738px">
 <div class="a" style="left:987px;top:781px;width:1296px;height:737px;border:2.5px solid #62f04a"></div>
 <div class="a" style="left:990px;top:784px;width:1290px;height:1px;border-top:1.5px dashed #bdbdbd"></div>
 <div class="a" style="left:2278px;top:784px;width:1px;height:730px;border-left:1.5px dashed #bdbdbd"></div>
 <div class="a" style="left:985px;top:890px;width:1px;height:496px;border-left:1.5px dashed #bdbdbd"></div>
 <div class="a" style="left:990px;top:795px;width:1282px;height:95px;background:#fff"></div>
 <div class="a" style="left:990px;top:793px;width:1282px;height:3px;border-top:2px dashed #666"></div>
 <div class="a" style="left:990px;top:888px;width:1282px;height:3px;border-top:2px dashed #555"></div>
 <div class="a" style="left:990px;top:795px;width:3px;height:95px;border-left:2px dashed #666"></div>
 <div class="a" style="left:1100px;top:797px;width:1px;height:92px;border-left:1.5px dashed #777"></div>
 <svg class="a" style="left:990px;top:795px" width="110" height="95"><circle cx="55.0" cy="51.0" r="25.5" fill="#f1e24f"/><path d="M55.0 14.0 L44.9 34.9 L65.1 34.9Z" fill="#f1e24f"/><path d="M23.0 69.5 L46.1 67.8 L36.0 50.3Z" fill="#f1e24f"/><path d="M87.0 69.5 L74.0 50.3 L63.9 67.8Z" fill="#f1e24f"/><circle cx="55.0" cy="51.0" r="15.0" fill="#fff"/></svg>
 <span class="t" style="left:1109px;top:832px;font-size:20.5px;font-weight:bold;color:#111">@syui.ai</span>
 <div class="a" style="left:990px;top:890px;width:1277px;height:496px;background:#000"></div>
 <div class="a" style="left:2225px;top:890px;width:41px;height:88px;background:#fff"></div>
 <div class="a" style="left:2246px;top:978px;width:1px;height:408px;background:#2a2a2a"></div>
 <div class="a" style="left:2266px;top:890px;width:1px;height:496px;border-left:1.5px dashed #bbb"></div>
 <div class="a" style="left:1024.6px;top:890px;width:1px;height:496px;border-left:1.5px dashed #bbb"></div>
 <div class="a" style="left:1356.4px;top:890px;width:1px;height:496px;border-left:1.5px dashed #bbb"></div>
 <div class="a" style="left:1024.6px;top:1343px;width:331.8px;height:1px;border-top:1.5px dashed #bbb"></div>
 <div class="a" style="left:1024.6px;top:1101px;width:331.8px;height:40px;background:#fff;border-radius:2px"></div>
 <span class="t" style="left:1190.5px;top:1115px;font-size:12px;font-weight:bold;color:#111;transform:translateX(-50%)">100</span>
 <div class="a" style="left:1437.0px;top:890px;width:1px;height:496px;border-left:1.5px dashed #bbb"></div>
 <div class="a" style="left:1769.4px;top:890px;width:1px;height:496px;border-left:1.5px dashed #bbb"></div>
 <div class="a" style="left:1437.0px;top:1343px;width:332.4px;height:1px;border-top:1.5px dashed #bbb"></div>
 <div class="a" style="left:1437.0px;top:1101px;width:332.4px;height:40px;background:#fff;border-radius:2px"></div>
 <span class="t" style="left:1603.2px;top:1115px;font-size:12px;font-weight:bold;color:#111;transform:translateX(-50%)">100</span>
 <div class="a" style="left:1850.0px;top:890px;width:1px;height:496px;border-left:1.5px dashed #bbb"></div>
 <div class="a" style="left:2182.8px;top:890px;width:1px;height:496px;border-left:1.5px dashed #bbb"></div>
 <div class="a" style="left:1850.0px;top:1343px;width:332.8px;height:1px;border-top:1.5px dashed #bbb"></div>
 <div class="a" style="left:1850.0px;top:1101px;width:332.8px;height:40px;background:#fff;border-radius:2px"></div>
 <span class="t" style="left:2016.4px;top:1115px;font-size:12px;font-weight:bold;color:#111;transform:translateX(-50%)">100</span>
 <svg class="a" style="left:1124px;top:899px" width="134" height="179" viewBox="0 0 134 179"><rect x="0" y="0" width="134" height="171" fill="#a9a83c"/><polygon points="0,0 40,0 0,30" fill="#c4c24c" opacity="0.8"/><polygon points="60,0 134,0 134,20 90,12" fill="#9a9932" opacity="0.8"/><polygon points="0,60 12,90 0,120" fill="#c4c24c" opacity="0.8"/><polygon points="122,40 134,30 134,90" fill="#9a9932" opacity="0.8"/><polygon points="0,140 30,171 0,171" fill="#c4c24c" opacity="0.8"/><polygon points="90,160 134,130 134,171 70,171" fill="#9a9932" opacity="0.8"/><polygon points="20,0 70,0 12,14" fill="#c4c24c" opacity="0.8"/><polygon points="122,100 134,110 134,150 122,140" fill="#9a9932" opacity="0.8"/><rect x="14" y="11.3" width="106.6" height="144.3" fill="#383838" stroke="#dcdc4e" stroke-width="2.8"/><circle cx="66.9" cy="83.0" r="16.3" fill="#fdf650"/><path d="M66.9 59.3 L60.5 72.7 L73.3 72.7Z" fill="#fdf650"/><path d="M46.4 94.8 L61.2 93.7 L54.7 82.6Z" fill="#fdf650"/><path d="M87.4 94.8 L79.1 82.6 L72.6 93.7Z" fill="#fdf650"/><circle cx="66.9" cy="83.0" r="9.6" fill="#383838"/><rect x="0" y="171" width="134" height="8" fill="#fff"/><rect x="63" y="173.5" width="9" height="2.5" fill="#333"/></svg>
 <svg class="a" style="left:1124px;top:1365px" width="134" height="21" viewBox="0 0 134 21"><rect x="0" y="0" width="134" height="171" fill="#a9a83c"/><polygon points="0,0 40,0 0,30" fill="#c4c24c" opacity="0.8"/><polygon points="60,0 134,0 134,20 90,12" fill="#9a9932" opacity="0.8"/><polygon points="0,60 12,90 0,120" fill="#c4c24c" opacity="0.8"/><polygon points="122,40 134,30 134,90" fill="#9a9932" opacity="0.8"/><polygon points="0,140 30,171 0,171" fill="#c4c24c" opacity="0.8"/><polygon points="90,160 134,130 134,171 70,171" fill="#9a9932" opacity="0.8"/><polygon points="20,0 70,0 12,14" fill="#c4c24c" opacity="0.8"/><polygon points="122,100 134,110 134,150 122,140" fill="#9a9932" opacity="0.8"/><rect x="14" y="11.3" width="106.6" height="144.3" fill="#383838" stroke="#dcdc4e" stroke-width="2.8"/><circle cx="66.9" cy="83.0" r="16.3" fill="#fdf650"/><path d="M66.9 59.3 L60.5 72.7 L73.3 72.7Z" fill="#fdf650"/><path d="M46.4 94.8 L61.2 93.7 L54.7 82.6Z" fill="#fdf650"/><path d="M87.4 94.8 L79.1 82.6 L72.6 93.7Z" fill="#fdf650"/><circle cx="66.9" cy="83.0" r="9.6" fill="#383838"/><rect x="0" y="171" width="134" height="8" fill="#fff"/><rect x="63" y="173.5" width="9" height="2.5" fill="#333"/></svg>
 <svg class="a" style="left:1536px;top:899px" width="134" height="179" viewBox="0 0 134 179"><rect x="0" y="0" width="134" height="171" fill="#a9a83c"/><polygon points="0,0 40,0 0,30" fill="#c4c24c" opacity="0.8"/><polygon points="60,0 134,0 134,20 90,12" fill="#9a9932" opacity="0.8"/><polygon points="0,60 12,90 0,120" fill="#c4c24c" opacity="0.8"/><polygon points="122,40 134,30 134,90" fill="#9a9932" opacity="0.8"/><polygon points="0,140 30,171 0,171" fill="#c4c24c" opacity="0.8"/><polygon points="90,160 134,130 134,171 70,171" fill="#9a9932" opacity="0.8"/><polygon points="20,0 70,0 12,14" fill="#c4c24c" opacity="0.8"/><polygon points="122,100 134,110 134,150 122,140" fill="#9a9932" opacity="0.8"/><rect x="14" y="11.3" width="106.6" height="144.3" fill="#383838" stroke="#dcdc4e" stroke-width="2.8"/><circle cx="66.9" cy="83.0" r="16.3" fill="#fdf650"/><path d="M66.9 59.3 L60.5 72.7 L73.3 72.7Z" fill="#fdf650"/><path d="M46.4 94.8 L61.2 93.7 L54.7 82.6Z" fill="#fdf650"/><path d="M87.4 94.8 L79.1 82.6 L72.6 93.7Z" fill="#fdf650"/><circle cx="66.9" cy="83.0" r="9.6" fill="#383838"/><rect x="0" y="171" width="134" height="8" fill="#fff"/><rect x="63" y="173.5" width="9" height="2.5" fill="#333"/></svg>
 <svg class="a" style="left:1536px;top:1365px" width="134" height="21" viewBox="0 0 134 21"><rect x="0" y="0" width="134" height="171" fill="#a9a83c"/><polygon points="0,0 40,0 0,30" fill="#c4c24c" opacity="0.8"/><polygon points="60,0 134,0 134,20 90,12" fill="#9a9932" opacity="0.8"/><polygon points="0,60 12,90 0,120" fill="#c4c24c" opacity="0.8"/><polygon points="122,40 134,30 134,90" fill="#9a9932" opacity="0.8"/><polygon points="0,140 30,171 0,171" fill="#c4c24c" opacity="0.8"/><polygon points="90,160 134,130 134,171 70,171" fill="#9a9932" opacity="0.8"/><polygon points="20,0 70,0 12,14" fill="#c4c24c" opacity="0.8"/><polygon points="122,100 134,110 134,150 122,140" fill="#9a9932" opacity="0.8"/><rect x="14" y="11.3" width="106.6" height="144.3" fill="#383838" stroke="#dcdc4e" stroke-width="2.8"/><circle cx="66.9" cy="83.0" r="16.3" fill="#fdf650"/><path d="M66.9 59.3 L60.5 72.7 L73.3 72.7Z" fill="#fdf650"/><path d="M46.4 94.8 L61.2 93.7 L54.7 82.6Z" fill="#fdf650"/><path d="M87.4 94.8 L79.1 82.6 L72.6 93.7Z" fill="#fdf650"/><circle cx="66.9" cy="83.0" r="9.6" fill="#383838"/><rect x="0" y="171" width="134" height="8" fill="#fff"/><rect x="63" y="173.5" width="9" height="2.5" fill="#333"/></svg>
 <svg class="a" style="left:1949px;top:899px" width="134" height="179" viewBox="0 0 134 179"><rect x="0" y="0" width="134" height="171" fill="#a9a83c"/><polygon points="0,0 40,0 0,30" fill="#c4c24c" opacity="0.8"/><polygon points="60,0 134,0 134,20 90,12" fill="#9a9932" opacity="0.8"/><polygon points="0,60 12,90 0,120" fill="#c4c24c" opacity="0.8"/><polygon points="122,40 134,30 134,90" fill="#9a9932" opacity="0.8"/><polygon points="0,140 30,171 0,171" fill="#c4c24c" opacity="0.8"/><polygon points="90,160 134,130 134,171 70,171" fill="#9a9932" opacity="0.8"/><polygon points="20,0 70,0 12,14" fill="#c4c24c" opacity="0.8"/><polygon points="122,100 134,110 134,150 122,140" fill="#9a9932" opacity="0.8"/><rect x="14" y="11.3" width="106.6" height="144.3" fill="#383838" stroke="#dcdc4e" stroke-width="2.8"/><circle cx="66.9" cy="83.0" r="16.3" fill="#fdf650"/><path d="M66.9 59.3 L60.5 72.7 L73.3 72.7Z" fill="#fdf650"/><path d="M46.4 94.8 L61.2 93.7 L54.7 82.6Z" fill="#fdf650"/><path d="M87.4 94.8 L79.1 82.6 L72.6 93.7Z" fill="#fdf650"/><circle cx="66.9" cy="83.0" r="9.6" fill="#383838"/><rect x="0" y="171" width="134" height="8" fill="#fff"/><rect x="63" y="173.5" width="9" height="2.5" fill="#333"/></svg>
 <svg class="a" style="left:1949px;top:1365px" width="134" height="21" viewBox="0 0 134 21"><rect x="0" y="0" width="134" height="171" fill="#a9a83c"/><polygon points="0,0 40,0 0,30" fill="#c4c24c" opacity="0.8"/><polygon points="60,0 134,0 134,20 90,12" fill="#9a9932" opacity="0.8"/><polygon points="0,60 12,90 0,120" fill="#c4c24c" opacity="0.8"/><polygon points="122,40 134,30 134,90" fill="#9a9932" opacity="0.8"/><polygon points="0,140 30,171 0,171" fill="#c4c24c" opacity="0.8"/><polygon points="90,160 134,130 134,171 70,171" fill="#9a9932" opacity="0.8"/><polygon points="20,0 70,0 12,14" fill="#c4c24c" opacity="0.8"/><polygon points="122,100 134,110 134,150 122,140" fill="#9a9932" opacity="0.8"/><rect x="14" y="11.3" width="106.6" height="144.3" fill="#383838" stroke="#dcdc4e" stroke-width="2.8"/><circle cx="66.9" cy="83.0" r="16.3" fill="#fdf650"/><path d="M66.9 59.3 L60.5 72.7 L73.3 72.7Z" fill="#fdf650"/><path d="M46.4 94.8 L61.2 93.7 L54.7 82.6Z" fill="#fdf650"/><path d="M87.4 94.8 L79.1 82.6 L72.6 93.7Z" fill="#fdf650"/><circle cx="66.9" cy="83.0" r="9.6" fill="#383838"/><rect x="0" y="171" width="134" height="8" fill="#fff"/><rect x="63" y="173.5" width="9" height="2.5" fill="#333"/></svg>
 <div class="a" style="left:990px;top:1386px;width:1290px;height:130px;background:#fff"></div>
 <div class="a" style="left:1419px;top:1386px;width:1.5px;height:130px;background:#c8c8c8"></div>
 <div class="a" style="left:1849px;top:1386px;width:1.5px;height:130px;background:#c8c8c8"></div>
 <div class="a" style="left:990px;top:1514px;width:1282px;height:2px;border-top:1.5px dashed #666"></div>
 <div class="a" style="left:2270px;top:1386px;width:2px;height:130px;border-left:1.5px dashed #777"></div>
 <svg class="a" style="left:1180px;top:1430px" width="50" height="44"><path d="M16.30 4.20 L19.59 8.45 L24.93 7.77 L24.25 13.11 L28.50 16.40 L24.25 19.69 L24.93 25.03 L19.59 24.35 L16.30 28.60 L13.01 24.35 L7.67 25.03 L8.35 19.69 L4.10 16.40 L8.35 13.11 L7.67 7.77 L13.01 8.45Z" fill="#000" stroke="#000" stroke-width="1.2" stroke-linejoin="round"/><path d="M36.50 20.80 L39.03 23.90 L43.01 23.49 L42.60 27.47 L45.70 30.00 L42.60 32.53 L43.01 36.51 L39.03 36.10 L36.50 39.20 L33.97 36.10 L29.99 36.51 L30.40 32.53 L27.30 30.00 L30.40 27.47 L29.99 23.49 L33.97 23.90Z" fill="#000" stroke="#000" stroke-width="1.2" stroke-linejoin="round"/><circle cx="13.3" cy="12.8" r="2" fill="#fff"/><circle cx="20" cy="19" r="1.8" fill="#fff"/><circle cx="35.3" cy="28.8" r="1.5" fill="#fff"/></svg>
 <svg class="a" style="left:1614px;top:1428px" width="42" height="42" viewBox="0 0 42 42"><path d="M10.4 10.7 A15 15 0 1 0 31.6 10.7" fill="none" stroke="#000" stroke-width="4" stroke-linecap="round"/><path d="M21 5.5 V23.5" stroke="#000" stroke-width="4" stroke-linecap="round"/></svg>
 <svg class="a" style="left:2047px;top:1433px" width="36" height="34" viewBox="0 0 36 34"><path d="M18 1 L35 32 Q35 33 34 33 H2 Q1 33 1 32Z" fill="#000" stroke="#000" stroke-width="1.5" stroke-linejoin="round"/><rect x="16.3" y="11" width="3.4" height="12" rx="1.5" fill="#fff"/><circle cx="18" cy="27.5" r="2" fill="#fff"/></svg>
 <div class="a" style="left:969.5px;top:764.0px;width:15px;height:15px;border-radius:50%;background:#fff;box-shadow:0 0 2px #000"></div>
 <div class="a" style="left:1626.5px;top:764.0px;width:15px;height:15px;border-radius:50%;background:#fff;box-shadow:0 0 2px #000"></div>
 <div class="a" style="left:2280.0px;top:764.0px;width:15px;height:15px;border-radius:50%;background:#fff;box-shadow:0 0 2px #000"></div>
 <div class="a" style="left:969.5px;top:1139.5px;width:15px;height:15px;border-radius:50%;background:#fff;box-shadow:0 0 2px #000"></div>
 <div class="a" style="left:2280.0px;top:1139.5px;width:15px;height:15px;border-radius:50%;background:#fff;box-shadow:0 0 2px #000"></div>
 <div class="a" style="left:1626.5px;top:1516.0px;width:15px;height:15px;border-radius:50%;background:#fff;box-shadow:0 0 2px #000"></div>
 <svg class="a" style="left:0;top:0;overflow:visible" width="2880" height="1738"><path d="M945.0 1469.0 L966.3 1469.0 L983.0 1503.0 L978.5 1509.5 L945.0 1488.0Z" fill="#fff" stroke="#000" stroke-width="1.8" stroke-linejoin="round"/><path d="M928.5 1503.0 L958.0 1505.0 L979.0 1511.0 L992.0 1503.0 L992.0 1530.0 L979.0 1521.0 L958.0 1528.0 L928.5 1530.0Z" fill="#fff" stroke="#000" stroke-width="1.8" stroke-linejoin="round"/><path d="M945.0 1563.0 L966.3 1563.0 L983.0 1529.6 L976.0 1523.0 L945.0 1543.0Z" fill="#fff" stroke="#000" stroke-width="1.8" stroke-linejoin="round"/><path d="M2318.5 1469.0 L2297.2 1469.0 L2280.5 1503.0 L2285.0 1509.5 L2318.5 1488.0Z" fill="#fff" stroke="#000" stroke-width="1.8" stroke-linejoin="round"/><path d="M2335.0 1503.0 L2305.5 1505.0 L2284.5 1511.0 L2271.5 1503.0 L2271.5 1530.0 L2284.5 1521.0 L2305.5 1528.0 L2335.0 1530.0Z" fill="#fff" stroke="#000" stroke-width="1.8" stroke-linejoin="round"/><path d="M2318.5 1563.0 L2297.2 1563.0 L2280.5 1529.6 L2287.5 1523.0 L2318.5 1543.0Z" fill="#fff" stroke="#000" stroke-width="1.8" stroke-linejoin="round"/></svg>
 </div>
 
</div>

<!-- ===== DETAILS ===== -->
<!--DETAILS-->
<div class="a" style="left:2344px;top:214px;width:319px;height:50px;background:#282828;border-radius:8px 8px 0 0"></div>
<svg class="a" style="left:2354px;top:223px" width="32" height="30" viewBox="0 0 32 30"><path d="M2 2H14M6 8H16M8 26H30M14 20H30M20 14H30" stroke="#9a9a9a" stroke-width="2"/><path d="M24 1 L29 6 L10 25 L1 29 L5 20Z" fill="#d0d0d0"/></svg>
<span class="t" style="left:2399px;top:222.66px;font-size:29.69px;color:#d0d0d0;letter-spacing:-3.71px;transform:scaleX(0.94);transform-origin:0 0;word-spacing:5.94px">詳細</span>
<svg class="a" style="left:2621px;top:229px" width="15" height="15" viewBox="0 0 15 15"><path d="M2 2L13 13M13 2L2 13" stroke="#d0d0d0" stroke-width="2.6"/></svg>
<div class="a" style="left:2344px;top:266px;width:528px;height:336px;background:#2a2a2a"></div>
<svg class="a" style="left:2357px;top:290px" width="30" height="29" viewBox="0 0 28 27"><rect x="1" y="1" width="6" height="6" fill="none" stroke="#c8c8c8" stroke-width="2"/><rect x="12" y="1" width="15" height="14" fill="none" stroke="#c8c8c8" stroke-width="2"/><rect x="1" y="10" width="6" height="17" fill="none" stroke="#c8c8c8" stroke-width="2"/><rect x="11.5" y="20" width="6" height="7" fill="none" stroke="#c8c8c8" stroke-width="2"/><rect x="21" y="20" width="6" height="7" fill="none" stroke="#c8c8c8" stroke-width="2"/></svg>
<div class="a" style="left:2395px;top:283px;width:397px;height:43px;background:#131313;border:2px solid #2c2c2c;border-radius:7px"></div>
<span class="t" style="left:2412px;top:288.86px;font-size:28.08px;color:#c8c8c8;transform:scaleX(0.925);transform-origin:0 0">GridPanel_52</span>
<div class="a" style="left:2807px;top:288px;width:33px;height:33px;background:#141414;border:2px solid #2c2c2c;border-radius:4px"></div>
<span class="t" style="left:2848px;top:291px;font-size:26px;color:#d0d0d0">Is</span>
<div class="a" style="left:2365px;top:337px;width:344px;height:41px;background:#383838;border:1.5px solid #1e1e1e;border-radius:6px"></div>
<svg class="a" style="left:2394px;top:344px" width="28" height="28"><path d="M14 1V27M1 14H27" stroke="#8bc34a" stroke-width="3.5"/></svg>
<span class="t" style="left:2431px;top:342.66px;font-size:29.69px;color:#d8d8d8;letter-spacing:-3.71px;transform:scaleX(0.94);transform-origin:0 0;word-spacing:5.94px">コンポーネントを追加</span>
<div class="a" style="left:2364px;top:388px;width:488px;height:120px;background:#1f1f1f"></div>
<div class="a" style="left:2362px;top:541px;width:396px;height:44px;background:#151515;border:2px solid #363636;border-radius:22px"></div>
<svg class="a" style="left:2372px;top:548px" width="30" height="30" viewBox="0 0 30 30"><circle cx="13" cy="13" r="9.5" fill="none" stroke="#d0d0d0" stroke-width="2.8"/><path d="M20 20 L27 27" stroke="#d0d0d0" stroke-width="2.8"/></svg>
<span class="t" style="left:2415px;top:548.66px;font-size:29.69px;color:#5c5c5c;letter-spacing:-3.71px;transform:scaleX(0.94);transform-origin:0 0;word-spacing:5.94px">検索</span>
<svg class="a" style="left:2786px;top:549px" width="29" height="29" viewBox="0 0 29 29"><rect x="0" y="0" width="29" height="29" rx="2" fill="#c8c8c8"/><rect x="4" y="9" width="9" height="6" fill="#242424"/><rect x="16" y="9" width="9" height="6" fill="#242424"/><rect x="4" y="18" width="9" height="6" fill="#242424"/><rect x="16" y="18" width="9" height="6" fill="#242424"/></svg>
<svg class="a" style="left:2833px;top:548px" width="31" height="31" viewBox="0 0 31 31"><rect x="12.5" y="0" width="6" height="31" rx="1" transform="rotate(0 15.5 15.5)" fill="#c8c8c8"/><rect x="12.5" y="0" width="6" height="31" rx="1" transform="rotate(45 15.5 15.5)" fill="#c8c8c8"/><rect x="12.5" y="0" width="6" height="31" rx="1" transform="rotate(90 15.5 15.5)" fill="#c8c8c8"/><rect x="12.5" y="0" width="6" height="31" rx="1" transform="rotate(135 15.5 15.5)" fill="#c8c8c8"/><circle cx="15.5" cy="15.5" r="11" fill="#c8c8c8"/><circle cx="15.5" cy="15.5" r="6" fill="#555"/><circle cx="15.5" cy="15.5" r="4" fill="#9a9a9a"/></svg>
<div class="a" style="left:2344px;top:602px;width:528px;height:1062px;background:#1e1e1e"></div>
<div class="a" style="left:2848px;top:607px;width:16px;height:465px;background:#555;border-radius:8px"></div>
<div class="a" style="left:2344px;top:602px;width:496px;height:52px;background:#2f2f2f"></div>
<svg class="a" style="left:2355px;top:621px" width="20" height="13"><path d="M0 0 L20 0 L10 13Z" fill="#8a8a8a"/></svg>
<span class="t" style="left:2389px;top:616.86px;font-size:21.28px;font-weight:bold;color:#d0d0d0;-webkit-text-stroke:0.5px currentColor;letter-spacing:-2.13px;transform:scaleX(0.94);transform-origin:0 0;word-spacing:3.40px">スロット (キャンバスパネルスロット)</span>
<div class="a" style="left:2344px;top:656px;width:496px;height:52px;background:#252525"></div>
<div class="a" style="left:2541px;top:656px;width:2px;height:52px;background:#1c1c1c"></div>
<div class="a" style="left:2750px;top:656px;width:2px;height:52px;background:#1c1c1c"></div>
<svg class="a" style="left:2358px;top:671px" width="13" height="20"><path d="M0 0 L13 10 L0 20Z" fill="#8a8a8a"/></svg>
<span class="t" style="left:2389px;top:670.22px;font-size:22.56px;color:#c0c0c0;letter-spacing:-2.82px;transform:scaleX(0.94);transform-origin:0 0;word-spacing:4.51px">アンカー</span>
<div class="a" style="left:2568px;top:661px;width:176px;height:40px;background:#141414;border:2px solid #2a2a2a;border-radius:6px"></div>
<span class="t" style="left:2583px;top:667.75px;font-size:28.50px;color:#d0d0d0;letter-spacing:-3.56px;transform:scaleX(0.94);transform-origin:0 0;word-spacing:5.70px">アンカー</span>
<svg class="a" style="left:2700px;top:675px" width="20" height="13"><path d="M2 2 L10 10 L18 2" stroke="#c8c8c8" stroke-width="2.8" fill="none"/></svg>
<svg class="a" style="left:2808px;top:670px" width="24" height="22" viewBox="0 0 24 22"><path d="M8 2 L2 8 L8 14" stroke="#c8c8c8" stroke-width="2.6" fill="none" stroke-linecap="round" stroke-linejoin="round"/><path d="M2 8 H15 Q22 8 22 14.5 Q22 20 16 20" stroke="#c8c8c8" stroke-width="2.6" fill="none" stroke-linecap="round"/></svg>
<div class="a" style="left:2344px;top:710px;width:496px;height:53px;background:#252525"></div>
<div class="a" style="left:2541px;top:710px;width:2px;height:53px;background:#1c1c1c"></div>
<div class="a" style="left:2750px;top:710px;width:2px;height:53px;background:#1c1c1c"></div>
<span class="t" style="left:2389px;top:724.27px;font-size:21.97px;color:#c0c0c0;letter-spacing:-2.75px;transform:scaleX(0.94);transform-origin:0 0;word-spacing:4.40px">左オフセット</span>
<div class="a" style="left:2568px;top:718px;width:176px;height:36px;background:#141414;border:2px solid #2a2a2a;border-radius:6px"></div>
<span class="t" style="left:2584px;top:726px;font-size:22px;color:#f0f0f0">-4.02002</span>
<svg class="a" style="left:2768px;top:724px" width="24" height="22" viewBox="0 0 24 22"><path d="M8 2 L2 8 L8 14" stroke="#c8c8c8" stroke-width="2.6" fill="none" stroke-linecap="round" stroke-linejoin="round"/><path d="M2 8 H15 Q22 8 22 14.5 Q22 20 16 20" stroke="#c8c8c8" stroke-width="2.6" fill="none" stroke-linecap="round"/></svg>
<svg class="a" style="left:2807px;top:722px" width="26" height="26" viewBox="0 0 26 26"><path d="M13 1 L25 13 L13 25 L1 13Z" fill="none" stroke="#3e3e3e" stroke-width="1.8"/></svg>
<div class="a" style="left:2344px;top:765px;width:496px;height:52px;background:#252525"></div>
<div class="a" style="left:2541px;top:765px;width:2px;height:52px;background:#1c1c1c"></div>
<div class="a" style="left:2750px;top:765px;width:2px;height:52px;background:#1c1c1c"></div>
<span class="t" style="left:2389px;top:778.22px;font-size:22.56px;color:#c0c0c0;letter-spacing:-2.82px;transform:scaleX(0.94);transform-origin:0 0;word-spacing:4.51px">位置 Y</span>
<div class="a" style="left:2568px;top:772px;width:176px;height:36px;background:#141414;border:2px solid #2a2a2a;border-radius:6px"></div>
<span class="t" style="left:2584px;top:780px;font-size:22px;color:#f0f0f0">-1098.290283</span>
<svg class="a" style="left:2768px;top:779px" width="24" height="22" viewBox="0 0 24 22"><path d="M8 2 L2 8 L8 14" stroke="#c8c8c8" stroke-width="2.6" fill="none" stroke-linecap="round" stroke-linejoin="round"/><path d="M2 8 H15 Q22 8 22 14.5 Q22 20 16 20" stroke="#c8c8c8" stroke-width="2.6" fill="none" stroke-linecap="round"/></svg>
<svg class="a" style="left:2807px;top:777px" width="26" height="26" viewBox="0 0 26 26"><path d="M13 1 L25 13 L13 25 L1 13Z" fill="none" stroke="#3e3e3e" stroke-width="1.8"/></svg>
<div class="a" style="left:2344px;top:819px;width:496px;height:52px;background:#252525"></div>
<div class="a" style="left:2541px;top:819px;width:2px;height:52px;background:#1c1c1c"></div>
<div class="a" style="left:2750px;top:819px;width:2px;height:52px;background:#1c1c1c"></div>
<span class="t" style="left:2389px;top:833.27px;font-size:21.97px;color:#c0c0c0;letter-spacing:-2.75px;transform:scaleX(0.94);transform-origin:0 0;word-spacing:4.40px">右オフセット</span>
<div class="a" style="left:2568px;top:826px;width:176px;height:36px;background:#141414;border:2px solid #2a2a2a;border-radius:6px"></div>
<span class="t" style="left:2584px;top:834px;font-size:22px;color:#f0f0f0">-11.89585</span>
<svg class="a" style="left:2768px;top:833px" width="24" height="22" viewBox="0 0 24 22"><path d="M8 2 L2 8 L8 14" stroke="#c8c8c8" stroke-width="2.6" fill="none" stroke-linecap="round" stroke-linejoin="round"/><path d="M2 8 H15 Q22 8 22 14.5 Q22 20 16 20" stroke="#c8c8c8" stroke-width="2.6" fill="none" stroke-linecap="round"/></svg>
<svg class="a" style="left:2807px;top:831px" width="26" height="26" viewBox="0 0 26 26"><path d="M13 1 L25 13 L13 25 L1 13Z" fill="none" stroke="#3e3e3e" stroke-width="1.8"/></svg>
<div class="a" style="left:2344px;top:873px;width:496px;height:52px;background:#252525"></div>
<div class="a" style="left:2541px;top:873px;width:2px;height:52px;background:#1c1c1c"></div>
<div class="a" style="left:2750px;top:873px;width:2px;height:52px;background:#1c1c1c"></div>
<span class="t" style="left:2389px;top:886.22px;font-size:22.56px;color:#c0c0c0;letter-spacing:-2.82px;transform:scaleX(0.94);transform-origin:0 0;word-spacing:4.51px">サイズ Y</span>
<div class="a" style="left:2568px;top:880px;width:176px;height:36px;background:#141414;border:2px solid #2a2a2a;border-radius:6px"></div>
<span class="t" style="left:2584px;top:888px;font-size:22px;color:#f0f0f0">1098.067993</span>
<svg class="a" style="left:2768px;top:887px" width="24" height="22" viewBox="0 0 24 22"><path d="M8 2 L2 8 L8 14" stroke="#c8c8c8" stroke-width="2.6" fill="none" stroke-linecap="round" stroke-linejoin="round"/><path d="M2 8 H15 Q22 8 22 14.5 Q22 20 16 20" stroke="#c8c8c8" stroke-width="2.6" fill="none" stroke-linecap="round"/></svg>
<svg class="a" style="left:2807px;top:885px" width="26" height="26" viewBox="0 0 26 26"><path d="M13 1 L25 13 L13 25 L1 13Z" fill="none" stroke="#3e3e3e" stroke-width="1.8"/></svg>
<div class="a" style="left:2344px;top:927px;width:496px;height:52px;background:#252525"></div>
<div class="a" style="left:2541px;top:927px;width:2px;height:52px;background:#1c1c1c"></div>
<div class="a" style="left:2750px;top:927px;width:2px;height:52px;background:#1c1c1c"></div>
<svg class="a" style="left:2358px;top:942px" width="13" height="20"><path d="M0 0 L13 10 L0 20Z" fill="#8a8a8a"/></svg>
<span class="t" style="left:2389px;top:941.08px;font-size:22.68px;color:#c0c0c0;transform:scaleX(0.925);transform-origin:0 0">Alignment</span>
<div class="a" style="left:2568px;top:934px;width:83px;height:36px;background:#141414;border:2px solid #2a2a2a;border-radius:6px"></div>
<span class="t" style="left:2584px;top:942px;font-size:22px;color:#f0f0f0">0.0</span>
<div class="a" style="left:2660px;top:934px;width:84px;height:36px;background:#141414;border:2px solid #2a2a2a;border-radius:6px"></div>
<span class="t" style="left:2676px;top:942px;font-size:22px;color:#f0f0f0">0.0</span>
<svg class="a" style="left:2807px;top:939px" width="26" height="26" viewBox="0 0 26 26"><path d="M13 1 L25 13 L13 25 L1 13Z" fill="none" stroke="#3e3e3e" stroke-width="1.8"/></svg>
<div class="a" style="left:2344px;top:981px;width:496px;height:52px;background:#252525"></div>
<div class="a" style="left:2541px;top:981px;width:2px;height:52px;background:#1c1c1c"></div>
<div class="a" style="left:2750px;top:981px;width:2px;height:52px;background:#1c1c1c"></div>
<span class="t" style="left:2389px;top:995.08px;font-size:22.68px;color:#c0c0c0;transform:scaleX(0.925);transform-origin:0 0">Size To Content</span>
<div class="a" style="left:2568px;top:989px;width:34px;height:34px;background:#141414;border:2px solid #2a2a2a;border-radius:5px"></div>
<svg class="a" style="left:2807px;top:993px" width="26" height="26" viewBox="0 0 26 26"><path d="M13 1 L25 13 L13 25 L1 13Z" fill="none" stroke="#3e3e3e" stroke-width="1.8"/></svg>
<div class="a" style="left:2344px;top:1035px;width:496px;height:52px;background:#252525"></div>
<div class="a" style="left:2541px;top:1035px;width:2px;height:52px;background:#1c1c1c"></div>
<div class="a" style="left:2750px;top:1035px;width:2px;height:52px;background:#1c1c1c"></div>
<span class="t" style="left:2389px;top:1049.10px;font-size:22.14px;color:#c0c0c0;transform:scaleX(0.925);transform-origin:0 0">ZOrder</span>
<div class="a" style="left:2568px;top:1042px;width:176px;height:36px;background:#141414;border:2px solid #2a2a2a;border-radius:6px"></div>
<span class="t" style="left:2584px;top:1050px;font-size:22px;color:#f0f0f0">2</span>
<svg class="a" style="left:2768px;top:1049px" width="24" height="22" viewBox="0 0 24 22"><path d="M8 2 L2 8 L8 14" stroke="#c8c8c8" stroke-width="2.6" fill="none" stroke-linecap="round" stroke-linejoin="round"/><path d="M2 8 H15 Q22 8 22 14.5 Q22 20 16 20" stroke="#c8c8c8" stroke-width="2.6" fill="none" stroke-linecap="round"/></svg>
<svg class="a" style="left:2807px;top:1047px" width="26" height="26" viewBox="0 0 26 26"><path d="M13 1 L25 13 L13 25 L1 13Z" fill="none" stroke="#3e3e3e" stroke-width="1.8"/></svg>
<div class="a" style="left:2344px;top:1090px;width:496px;height:50px;background:#2f2f2f"></div>
<svg class="a" style="left:2355px;top:1108px" width="20" height="13"><path d="M0 0 L20 0 L10 13Z" fill="#8a8a8a"/></svg>
<span class="t" style="left:2389px;top:1103.86px;font-size:21.28px;font-weight:bold;color:#d0d0d0;-webkit-text-stroke:0.5px currentColor;letter-spacing:-2.13px;transform:scaleX(0.94);transform-origin:0 0;word-spacing:3.40px">フィル ルール</span>
<div class="a" style="left:2344px;top:1142px;width:496px;height:53px;background:#252525"></div>
<div class="a" style="left:2541px;top:1142px;width:2px;height:53px;background:#1c1c1c"></div>
<div class="a" style="left:2750px;top:1142px;width:2px;height:53px;background:#1c1c1c"></div>
<svg class="a" style="left:2355px;top:1160px" width="20" height="13"><path d="M0 0 L20 0 L10 13Z" fill="#8a8a8a"/></svg>
<span class="t" style="left:2389px;top:1156.08px;font-size:22.68px;color:#c0c0c0;transform:scaleX(0.925);transform-origin:0 0">Column Fill</span>
<span class="t" style="left:2566px;top:1153.98px;font-size:25.53px;color:#c0c0c0;letter-spacing:-3.19px;transform:scaleX(0.94);transform-origin:0 0;word-spacing:5.10px">3 配列ｴ</span>
<svg class="a" style="left:2656px;top:1152px" width="31" height="31" viewBox="0 0 31 31"><circle cx="15.5" cy="15.5" r="13.5" fill="none" stroke="#c8c8c8" stroke-width="2.6"/><path d="M15.5 8V23M8 15.5H23" stroke="#c8c8c8" stroke-width="2.6"/></svg>
<svg class="a" style="left:2709px;top:1152px" width="29" height="32" viewBox="0 0 29 32"><rect x="9" y="0" width="11" height="4" rx="1" fill="#c8c8c8"/><rect x="0" y="4" width="29" height="4" rx="1" fill="#c8c8c8"/><path d="M4 11 H25 L23 31 H6Z" fill="#c8c8c8"/><rect x="10" y="13" width="3" height="14" fill="#252525"/><rect x="16" y="13" width="3" height="14" fill="#252525"/></svg>
<svg class="a" style="left:2808px;top:1156px" width="24" height="22" viewBox="0 0 24 22"><path d="M8 2 L2 8 L8 14" stroke="#c8c8c8" stroke-width="2.6" fill="none" stroke-linecap="round" stroke-linejoin="round"/><path d="M2 8 H15 Q22 8 22 14.5 Q22 20 16 20" stroke="#c8c8c8" stroke-width="2.6" fill="none" stroke-linecap="round"/></svg>
<div class="a" style="left:2344px;top:1197px;width:496px;height:56px;background:#252525"></div>
<div class="a" style="left:2541px;top:1197px;width:2px;height:56px;background:#1c1c1c"></div>
<div class="a" style="left:2750px;top:1197px;width:2px;height:56px;background:#1c1c1c"></div>
<div class="a" style="left:2344px;top:1197px;width:31px;height:56px;background:#1f1f1f"></div>
<span class="t" style="left:2537px;top:1213.27px;font-size:21.97px;color:#a8a8a8;transform:translateX(-100%) scaleX(0.94);transform-origin:100% 0;letter-spacing:-2.75px;word-spacing:4.40px">インデックス</span>
<div class="a" style="left:2567px;top:1205px;width:105px;height:38px;background:#141414;border:2px solid #2a2a2a;border-radius:6px"></div>
<span class="t" style="left:2585px;top:1214px;font-size:22px;color:#f0f0f0">1.0</span>
<svg class="a" style="left:2703px;top:1218px" width="20" height="13"><path d="M2 2 L10 10 L18 2" stroke="#c8c8c8" stroke-width="2.8" fill="none"/></svg>
<svg class="a" style="left:2808px;top:1213px" width="24" height="22" viewBox="0 0 24 22"><path d="M8 2 L2 8 L8 14" stroke="#c8c8c8" stroke-width="2.6" fill="none" stroke-linecap="round" stroke-linejoin="round"/><path d="M2 8 H15 Q22 8 22 14.5 Q22 20 16 20" stroke="#c8c8c8" stroke-width="2.6" fill="none" stroke-linecap="round"/></svg>
<div class="a" style="left:2344px;top:1255px;width:496px;height:56px;background:#252525"></div>
<div class="a" style="left:2541px;top:1255px;width:2px;height:56px;background:#1c1c1c"></div>
<div class="a" style="left:2750px;top:1255px;width:2px;height:56px;background:#1c1c1c"></div>
<div class="a" style="left:2344px;top:1255px;width:31px;height:56px;background:#1f1f1f"></div>
<span class="t" style="left:2537px;top:1271.27px;font-size:21.97px;color:#a8a8a8;transform:translateX(-100%) scaleX(0.94);transform-origin:100% 0;letter-spacing:-2.75px;word-spacing:4.40px">インデックス</span>
<div class="a" style="left:2567px;top:1263px;width:105px;height:38px;background:#141414;border:2px solid #2a2a2a;border-radius:6px"></div>
<span class="t" style="left:2585px;top:1272px;font-size:22px;color:#f0f0f0">1.0</span>
<svg class="a" style="left:2703px;top:1276px" width="20" height="13"><path d="M2 2 L10 10 L18 2" stroke="#c8c8c8" stroke-width="2.8" fill="none"/></svg>
<svg class="a" style="left:2808px;top:1271px" width="24" height="22" viewBox="0 0 24 22"><path d="M8 2 L2 8 L8 14" stroke="#c8c8c8" stroke-width="2.6" fill="none" stroke-linecap="round" stroke-linejoin="round"/><path d="M2 8 H15 Q22 8 22 14.5 Q22 20 16 20" stroke="#c8c8c8" stroke-width="2.6" fill="none" stroke-linecap="round"/></svg>
<div class="a" style="left:2344px;top:1313px;width:496px;height:56px;background:#252525"></div>
<div class="a" style="left:2541px;top:1313px;width:2px;height:56px;background:#1c1c1c"></div>
<div class="a" style="left:2750px;top:1313px;width:2px;height:56px;background:#1c1c1c"></div>
<div class="a" style="left:2344px;top:1313px;width:31px;height:56px;background:#1f1f1f"></div>
<span class="t" style="left:2537px;top:1329.27px;font-size:21.97px;color:#a8a8a8;transform:translateX(-100%) scaleX(0.94);transform-origin:100% 0;letter-spacing:-2.75px;word-spacing:4.40px">インデックス</span>
<div class="a" style="left:2567px;top:1321px;width:105px;height:38px;background:#141414;border:2px solid #2a2a2a;border-radius:6px"></div>
<span class="t" style="left:2585px;top:1330px;font-size:22px;color:#f0f0f0">1.0</span>
<svg class="a" style="left:2703px;top:1334px" width="20" height="13"><path d="M2 2 L10 10 L18 2" stroke="#c8c8c8" stroke-width="2.8" fill="none"/></svg>
<svg class="a" style="left:2808px;top:1329px" width="24" height="22" viewBox="0 0 24 22"><path d="M8 2 L2 8 L8 14" stroke="#c8c8c8" stroke-width="2.6" fill="none" stroke-linecap="round" stroke-linejoin="round"/><path d="M2 8 H15 Q22 8 22 14.5 Q22 20 16 20" stroke="#c8c8c8" stroke-width="2.6" fill="none" stroke-linecap="round"/></svg>
<div class="a" style="left:2344px;top:1371px;width:496px;height:53px;background:#252525"></div>
<div class="a" style="left:2541px;top:1371px;width:2px;height:53px;background:#1c1c1c"></div>
<div class="a" style="left:2750px;top:1371px;width:2px;height:53px;background:#1c1c1c"></div>
<svg class="a" style="left:2355px;top:1390px" width="20" height="13"><path d="M0 0 L20 0 L10 13Z" fill="#8a8a8a"/></svg>
<span class="t" style="left:2389px;top:1385.08px;font-size:22.68px;color:#c0c0c0;transform:scaleX(0.925);transform-origin:0 0">Row Fill</span>
<span class="t" style="left:2566px;top:1383.98px;font-size:25.53px;color:#c0c0c0;letter-spacing:-3.19px;transform:scaleX(0.94);transform-origin:0 0;word-spacing:5.10px">1 配列ｴ</span>
<svg class="a" style="left:2656px;top:1382px" width="31" height="31" viewBox="0 0 31 31"><circle cx="15.5" cy="15.5" r="13.5" fill="none" stroke="#c8c8c8" stroke-width="2.6"/><path d="M15.5 8V23M8 15.5H23" stroke="#c8c8c8" stroke-width="2.6"/></svg>
<svg class="a" style="left:2709px;top:1380px" width="29" height="32" viewBox="0 0 29 32"><rect x="9" y="0" width="11" height="4" rx="1" fill="#c8c8c8"/><rect x="0" y="4" width="29" height="4" rx="1" fill="#c8c8c8"/><path d="M4 11 H25 L23 31 H6Z" fill="#c8c8c8"/><rect x="10" y="13" width="3" height="14" fill="#252525"/><rect x="16" y="13" width="3" height="14" fill="#252525"/></svg>
<svg class="a" style="left:2808px;top:1386px" width="24" height="22" viewBox="0 0 24 22"><path d="M8 2 L2 8 L8 14" stroke="#c8c8c8" stroke-width="2.6" fill="none" stroke-linecap="round" stroke-linejoin="round"/><path d="M2 8 H15 Q22 8 22 14.5 Q22 20 16 20" stroke="#c8c8c8" stroke-width="2.6" fill="none" stroke-linecap="round"/></svg>
<div class="a" style="left:2344px;top:1426px;width:496px;height:56px;background:#252525"></div>
<div class="a" style="left:2541px;top:1426px;width:2px;height:56px;background:#1c1c1c"></div>
<div class="a" style="left:2750px;top:1426px;width:2px;height:56px;background:#1c1c1c"></div>
<div class="a" style="left:2344px;top:1426px;width:31px;height:56px;background:#1f1f1f"></div>
<span class="t" style="left:2537px;top:1442.27px;font-size:21.97px;color:#a8a8a8;transform:translateX(-100%) scaleX(0.94);transform-origin:100% 0;letter-spacing:-2.75px;word-spacing:4.40px">インデックス</span>
<div class="a" style="left:2567px;top:1434px;width:105px;height:38px;background:#141414;border:2px solid #2a2a2a;border-radius:6px"></div>
<span class="t" style="left:2585px;top:1443px;font-size:22px;color:#f0f0f0">1.0</span>
<svg class="a" style="left:2703px;top:1447px" width="20" height="13"><path d="M2 2 L10 10 L18 2" stroke="#c8c8c8" stroke-width="2.8" fill="none"/></svg>
<svg class="a" style="left:2808px;top:1442px" width="24" height="22" viewBox="0 0 24 22"><path d="M8 2 L2 8 L8 14" stroke="#c8c8c8" stroke-width="2.6" fill="none" stroke-linecap="round" stroke-linejoin="round"/><path d="M2 8 H15 Q22 8 22 14.5 Q22 20 16 20" stroke="#c8c8c8" stroke-width="2.6" fill="none" stroke-linecap="round"/></svg>
<div class="a" style="left:2344px;top:1482px;width:496px;height:52px;background:#2f2f2f"></div>
<svg class="a" style="left:2355px;top:1501px" width="20" height="13"><path d="M0 0 L20 0 L10 13Z" fill="#8a8a8a"/></svg>
<span class="t" style="left:2389px;top:1496.86px;font-size:21.28px;font-weight:bold;color:#d0d0d0;-webkit-text-stroke:0.5px currentColor;letter-spacing:-2.13px;transform:scaleX(0.94);transform-origin:0 0;word-spacing:3.40px">アクセシビリティ</span>
<div class="a" style="left:2344px;top:1536px;width:496px;height:53px;background:#252525"></div>
<div class="a" style="left:2541px;top:1536px;width:2px;height:53px;background:#1c1c1c"></div>
<div class="a" style="left:2750px;top:1536px;width:2px;height:53px;background:#1c1c1c"></div>
<span class="t" style="left:2389px;top:1550.11px;font-size:21.92px;color:#c0c0c0;transform:scaleX(0.925);transform-origin:0 0">Override Acce...</span>
<div class="a" style="left:2567px;top:1544px;width:34px;height:34px;background:#141414;border:2px solid #2a2a2a;border-radius:5px"></div>
<div class="a" style="left:2344px;top:1591px;width:496px;height:52px;background:#252525"></div>
<div class="a" style="left:2541px;top:1591px;width:2px;height:52px;background:#1c1c1c"></div>
<div class="a" style="left:2750px;top:1591px;width:2px;height:52px;background:#1c1c1c"></div>
<span class="t" style="left:2389px;top:1605.11px;font-size:21.92px;color:#7a7a7a;transform:scaleX(0.925);transform-origin:0 0">Can Children b...</span>
<div class="a" style="left:2567px;top:1599px;width:34px;height:34px;background:#1c1c1c;border:2px solid #262626;border-radius:5px"></div>
<svg class="a" style="left:2573px;top:1607px" width="22" height="18"><path d="M2 9 L8 15 L20 3" stroke="#2e5aa8" stroke-width="3.2" fill="none"/></svg>
<div class="a" style="left:2344px;top:1645px;width:496px;height:55px;background:#252525"></div>
<div class="a" style="left:2541px;top:1645px;width:2px;height:55px;background:#1c1c1c"></div>
<div class="a" style="left:2750px;top:1645px;width:2px;height:55px;background:#1c1c1c"></div>
<span class="t" style="left:2389px;top:1661px;font-size:20.3px;color:#7a7a7a">Accessible B...</span>
<div class="a" style="left:2567px;top:1653px;width:185px;height:40px;background:#383838;border-radius:6px"></div>
<span class="t" style="left:2585px;top:1660px;font-size:20px;color:#888">Not Accessible</span>
<div class="a" style="left:2344px;top:1664px;width:536px;height:10px;background:#1c1c1c"></div>

<!-- ===== STATUS BAR ===== -->
<div class="a" style="left:0;top:1673.5px;width:2874px;height:65px;background:#262626"></div>
<div class="sep" style="left:309px;top:1673px;height:65px"></div>
<div class="sep" style="left:565px;top:1673px;height:65px"></div>
<div class="sep" style="left:753px;top:1673px;height:65px"></div>
<div class="sep" style="left:1557px;top:1673px;height:65px"></div>
<div class="sep" style="left:2187px;top:1673px;height:65px"></div>
<div class="sep" style="left:2465px;top:1673px;height:65px"></div>
<svg class="a" style="left:20px;top:1688px" width="36" height="36" viewBox="0 0 36 36"><path d="M2 4 Q2 2 4 2 H16 L19.5 7.8 H2Z" fill="#7a7a7a"/><rect x="2" y="10.4" width="30.2" height="19.5" rx="1.8" fill="#c8c8c8"/><circle cx="25.7" cy="21.4" r="9.6" fill="#262626"/><path d="M21 26 L14.5 33" stroke="#262626" stroke-width="6" stroke-linecap="round"/><circle cx="25.7" cy="21.4" r="6.4" fill="#262626" stroke="#c8c8c8" stroke-width="2.5"/><path d="M21 26.5 L15 32.5" stroke="#c8c8c8" stroke-width="2.8" stroke-linecap="round"/></svg>
<span class="t" style="left:62px;top:1690.75px;font-size:28.50px;color:#c8c8c8;letter-spacing:-3.56px;transform:scaleX(0.94);transform-origin:0 0;word-spacing:5.70px">コンテンツ ドロワー</span>
<svg class="a" style="left:335px;top:1690px" width="32" height="30" viewBox="0 0 32 30"><path d="M1 8 L30 2 M6 7 L8 2 M13 5.5 L15 0.5 M20 4 L22 -1 M27 2.5 L29 -2" stroke="#c8c8c8" stroke-width="2.2"/><rect x="1" y="12" width="30" height="17" fill="#8a8a8a"/><rect x="4" y="17" width="11" height="9" fill="#c8c8c8"/><rect x="17" y="17" width="11" height="9" fill="#c8c8c8"/><rect x="1" y="12" width="30" height="3" fill="#c8c8c8"/></svg>
<span class="t" style="left:375px;top:1690.75px;font-size:28.50px;color:#c8c8c8;letter-spacing:-3.56px;transform:scaleX(0.94);transform-origin:0 0;word-spacing:5.70px">アニメーション</span>
<svg class="a" style="left:592px;top:1688px" width="26" height="34" viewBox="0 0 26 34"><rect x="0" y="4" width="26" height="30" fill="#c8c8c8"/><rect x="4" y="0" width="3" height="7" fill="#c8c8c8"/><rect x="19" y="0" width="3" height="7" fill="#c8c8c8"/><path d="M5 15 L11 19 L5 23" stroke="#242424" stroke-width="2.5" fill="none"/><rect x="12" y="24" width="9" height="2.5" fill="#242424"/></svg>
<span class="t" style="left:630px;top:1689.61px;font-size:30.28px;color:#c8c8c8;letter-spacing:-3.79px;transform:scaleX(0.94);transform-origin:0 0;word-spacing:6.06px">出力ログ</span>
<svg class="a" style="left:785px;top:1691px" width="33" height="28" viewBox="0 0 33 28"><rect x="1.2" y="1.2" width="30.6" height="25.6" fill="none" stroke="#c8c8c8" stroke-width="2.4"/><path d="M7 9 L14 13 L7 17" stroke="#c8c8c8" stroke-width="2.4" fill="none"/><rect x="16" y="18" width="10" height="2.4" fill="#c8c8c8"/></svg>
<span class="t" style="left:825px;top:1692.81px;font-size:29.16px;color:#c8c8c8;transform:scaleX(0.925);transform-origin:0 0">Cmd</span>
<svg class="a" style="left:895px;top:1699px" width="20" height="13"><path d="M2 2 L10 10 L18 2" stroke="#c8c8c8" stroke-width="2.8" fill="none"/></svg>
<div class="a" style="left:941px;top:1685px;width:599px;height:41px;background:#141414;border:2px solid #2a2a2a;border-radius:6px"></div>
<span class="t" style="left:960px;top:1693.00px;font-size:25.29px;color:#5c5c5c;letter-spacing:-3.16px;transform:scaleX(0.94);transform-origin:0 0;word-spacing:5.06px">コンソールコマンドを入力します</span>
<svg class="a" style="left:2216px;top:1689px" width="34" height="34" viewBox="0 0 34 34"><path d="M0 2 Q0 0 2 0 H22 L28 6 V18 H18 L12 32 H2 Q0 32 0 30Z" fill="#8a8a8a"/><rect x="5" y="0" width="15" height="10" fill="#c8c8c8"/><rect x="13" y="2" width="4" height="6" fill="#444"/><rect x="5" y="16" width="12" height="14" fill="#c8c8c8"/><path d="M15 24 L21 30 L32 18" stroke="#c8c8c8" stroke-width="3.5" fill="none"/></svg>
<span class="t" style="left:2259px;top:1689.56px;font-size:30.88px;color:#c8c8c8;letter-spacing:-3.86px;transform:scaleX(0.94);transform-origin:0 0;word-spacing:6.18px">すべて保存済み</span>
<svg class="a" style="left:2500px;top:1689px" width="28" height="34" viewBox="0 0 28 34"><circle cx="5" cy="5" r="4.5" fill="#c8c8c8"/><circle cx="23" cy="5" r="4.5" fill="#c8c8c8"/><circle cx="5" cy="29" r="4.5" fill="#c8c8c8"/><path d="M5 5 V29 M23 5 Q23 17 5 20" stroke="#c8c8c8" stroke-width="2.6" fill="none"/></svg>
<span class="t" style="left:2539px;top:1690.80px;font-size:27.91px;color:#c8c8c8;letter-spacing:-3.49px;transform:scaleX(0.94);transform-origin:0 0;word-spacing:5.58px">リビジョンコントロール</span>
<svg class="a" style="left:2816px;top:1699px" width="20" height="13"><path d="M2 2 L10 10 L18 2" stroke="#c8c8c8" stroke-width="2.8" fill="none"/></svg>

</div>
</body></html>
